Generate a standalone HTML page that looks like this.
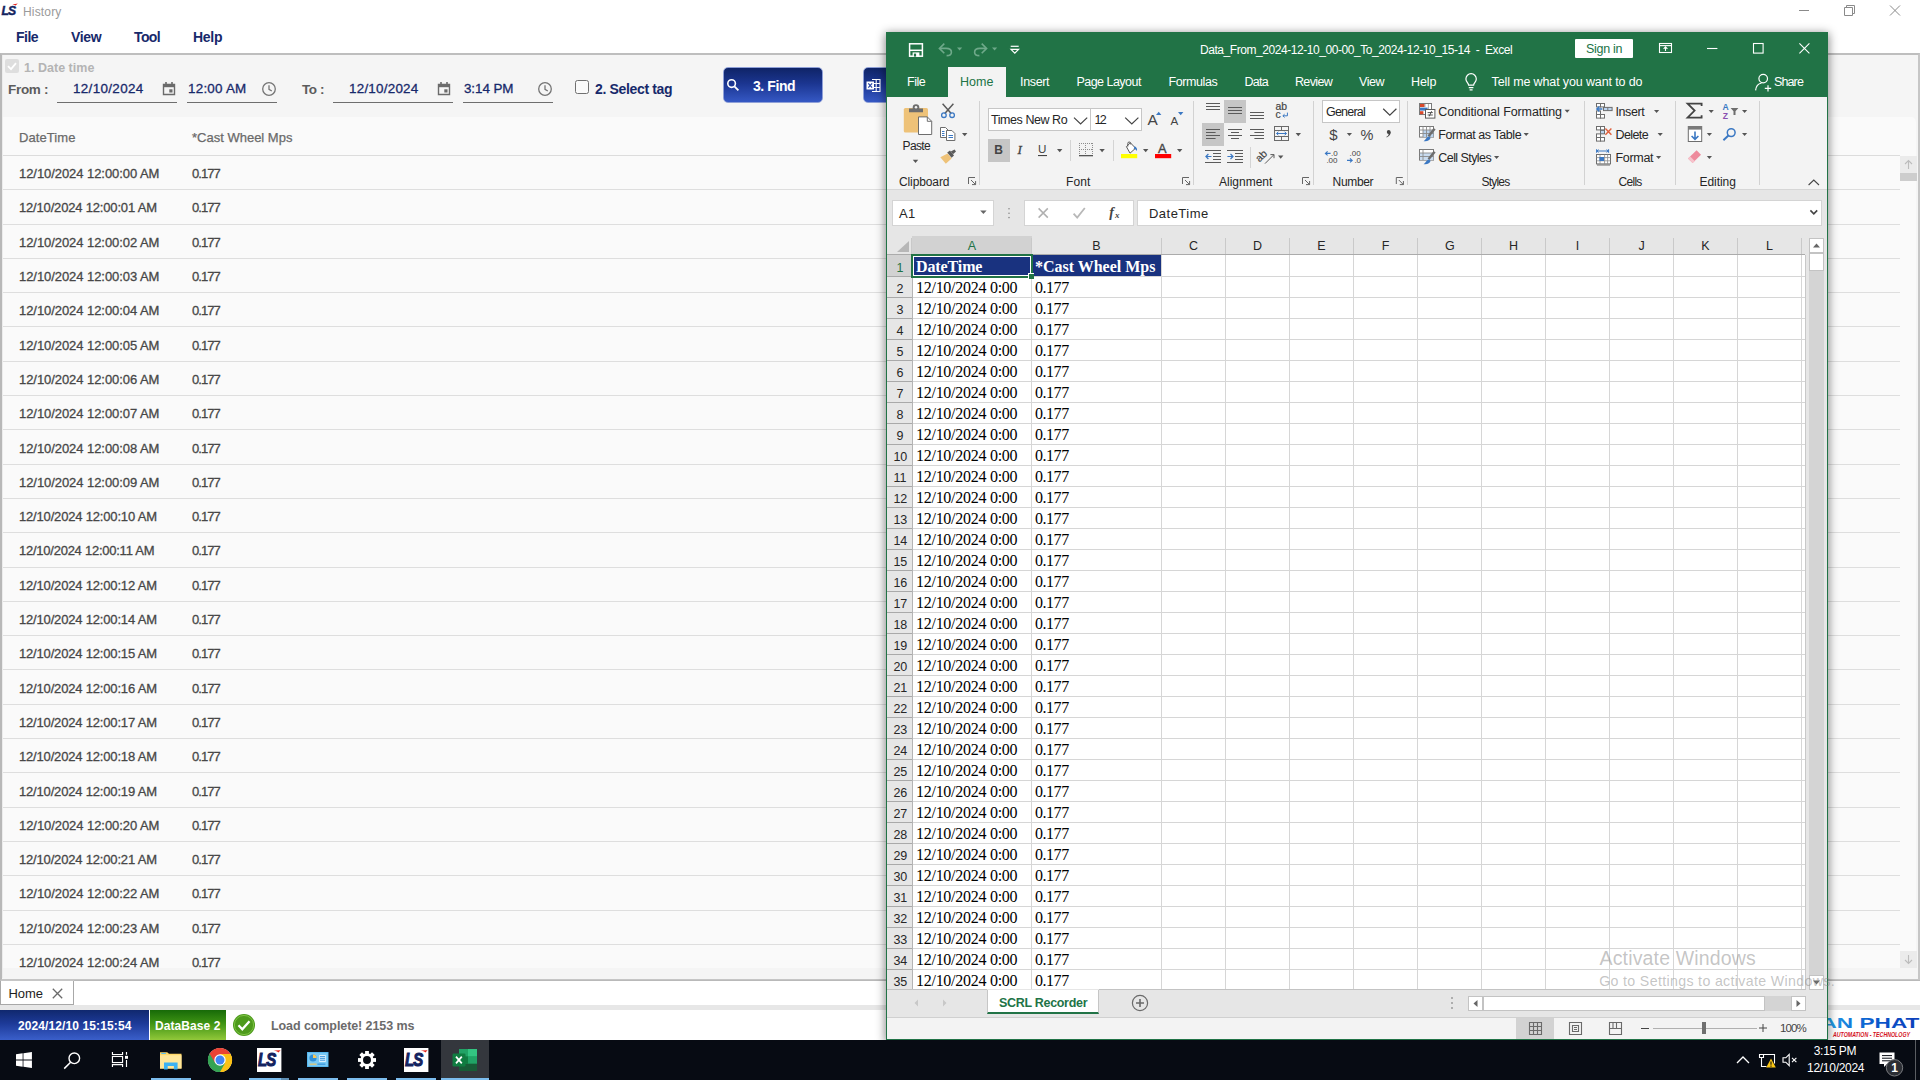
<!DOCTYPE html>
<html><head><meta charset="utf-8"><title>History</title><style>
*{margin:0;padding:0;box-sizing:border-box}
html,body{width:1920px;height:1080px;overflow:hidden;background:#fff;font-family:"Liberation Sans",sans-serif}
#root{position:relative;width:1920px;height:1080px;overflow:hidden}
#root div,#root svg,#root span.t{position:absolute}
span.t{white-space:pre;display:block}
</style></head><body><div id="root">
<div style="left:0px;top:0px;width:1920px;height:53px;background:#fff;"></div>
<svg style="left:1px;top:3px;" width="18" height="14" viewBox="0 0 18 14"><text x="0.6" y="11.8" font-family="Liberation Sans" font-weight="700" font-style="italic" font-size="12.2" fill="#14245f" stroke="#14245f" stroke-width=".45" letter-spacing="-1">LS</text><path d="M11.5 1.6 L16.8 0.6 L14.6 2.6 Z" fill="#e2231a"/></svg>
<span id="t0" class="t" style="left:23px;top:3.00px;line-height:18px;font-size:12px;color:#9a9a9a;font-family:'Liberation Sans',sans-serif;letter-spacing:0.162px;">History</span>
<span id="t1" class="t" style="left:16px;top:27.00px;line-height:20px;font-size:14px;color:#17296b;font-family:'Liberation Sans',sans-serif;font-weight:700;letter-spacing:-0.493px;">File</span>
<span id="t2" class="t" style="left:71px;top:27.00px;line-height:20px;font-size:14px;color:#17296b;font-family:'Liberation Sans',sans-serif;font-weight:700;letter-spacing:-0.359px;">View</span>
<span id="t3" class="t" style="left:134px;top:27.00px;line-height:20px;font-size:14px;color:#17296b;font-family:'Liberation Sans',sans-serif;font-weight:700;letter-spacing:-0.604px;">Tool</span>
<span id="t4" class="t" style="left:193px;top:27.00px;line-height:20px;font-size:14px;color:#17296b;font-family:'Liberation Sans',sans-serif;font-weight:700;letter-spacing:-0.270px;">Help</span>
<svg style="left:1795px;top:0px;" width="120" height="22" viewBox="0 0 120 22"><g stroke="#8a8a8a" stroke-width="1" fill="none"><path d="M4 10.5H14"/><path d="M49.5 7.5h8v8h-8z"/><path d="M51.5 7.5v-2h8v8h-2"/><path d="M95 5.5l10 10M105 5.5l-10 10"/></g></svg>
<div style="left:0px;top:53px;width:1920px;height:928px;background:#f5f5f5;border:2px solid #c6c6c6;border-left-color:#b8b8b8;border-top-color:#bebebe;"></div>
<div style="left:2px;top:55px;width:1px;height:923px;background:#ececec;"></div>
<div style="left:3px;top:117px;width:1913px;height:851px;background:#fafafa;border-radius:0 5px 0 0;"></div>
<svg style="left:5px;top:59px;" width="14" height="14" viewBox="0 0 14 14"><rect x="0" y="0" width="14" height="14" rx="2" fill="#dedede"/><path d="M3 7.2l3 3 5-6" stroke="#fff" stroke-width="1.8" fill="none"/></svg>
<span id="t5" class="t" style="left:24px;top:58.50px;line-height:18px;font-size:12.5px;color:#b4b4b4;font-family:'Liberation Sans',sans-serif;font-weight:700;letter-spacing:0.020px;">1. Date time</span>
<span id="t6" class="t" style="left:8px;top:80.00px;line-height:20px;font-size:13.5px;color:#5c5c5c;font-family:'Liberation Sans',sans-serif;font-weight:700;letter-spacing:-0.291px;">From :</span>
<span id="t7" class="t" style="left:73px;top:79.40px;line-height:19px;font-size:13.4px;color:#17296b;font-family:'Liberation Sans',sans-serif;-webkit-text-stroke:0.3px #17296b;letter-spacing:0.355px;">12/10/2024</span>
<div style="left:57px;top:102px;width:120px;height:1px;background:#6e6e6e;"></div>
<svg style="left:162px;top:81px;" width="14" height="15" viewBox="0 0 14 15"><path d="M1.5 3.5h11v10h-11z" fill="none" stroke="#6b6b6b" stroke-width="1.4"/><rect x="1" y="3" width="12" height="3.2" fill="#6b6b6b"/><rect x="3.2" y="1" width="1.6" height="3" fill="#6b6b6b"/><rect x="9.2" y="1" width="1.6" height="3" fill="#6b6b6b"/><rect x="7.3" y="8.3" width="3.2" height="3.2" fill="#6b6b6b"/></svg>
<span id="t8" class="t" style="left:188px;top:79.40px;line-height:19px;font-size:13.4px;color:#17296b;font-family:'Liberation Sans',sans-serif;-webkit-text-stroke:0.3px #17296b;letter-spacing:0.243px;">12:00 AM</span>
<div style="left:187px;top:102px;width:90px;height:1px;background:#6e6e6e;"></div>
<svg style="left:261px;top:81px;" width="16" height="16" viewBox="0 0 16 16"><circle cx="8" cy="8" r="6.3" fill="none" stroke="#757575" stroke-width="1.3"/><path d="M8 4.2V8.3l2.8 1.7" fill="none" stroke="#757575" stroke-width="1.3"/></svg>
<span id="t9" class="t" style="left:302px;top:80.00px;line-height:20px;font-size:13.5px;color:#5c5c5c;font-family:'Liberation Sans',sans-serif;font-weight:700;letter-spacing:-0.386px;">To :</span>
<span id="t10" class="t" style="left:349px;top:79.40px;line-height:19px;font-size:13.4px;color:#17296b;font-family:'Liberation Sans',sans-serif;-webkit-text-stroke:0.3px #17296b;letter-spacing:0.249px;">12/10/2024</span>
<div style="left:333px;top:102px;width:120px;height:1px;background:#6e6e6e;"></div>
<svg style="left:437px;top:81px;" width="14" height="15" viewBox="0 0 14 15"><path d="M1.5 3.5h11v10h-11z" fill="none" stroke="#6b6b6b" stroke-width="1.4"/><rect x="1" y="3" width="12" height="3.2" fill="#6b6b6b"/><rect x="3.2" y="1" width="1.6" height="3" fill="#6b6b6b"/><rect x="9.2" y="1" width="1.6" height="3" fill="#6b6b6b"/><rect x="7.3" y="8.3" width="3.2" height="3.2" fill="#6b6b6b"/></svg>
<span id="t11" class="t" style="left:464px;top:79.40px;line-height:19px;font-size:13.4px;color:#17296b;font-family:'Liberation Sans',sans-serif;-webkit-text-stroke:0.3px #17296b;letter-spacing:-0.073px;">3:14 PM</span>
<div style="left:463px;top:102px;width:90px;height:1px;background:#6e6e6e;"></div>
<svg style="left:537px;top:81px;" width="16" height="16" viewBox="0 0 16 16"><circle cx="8" cy="8" r="6.3" fill="none" stroke="#757575" stroke-width="1.3"/><path d="M8 4.2V8.3l2.8 1.7" fill="none" stroke="#757575" stroke-width="1.3"/></svg>
<div style="left:575px;top:80px;width:14px;height:14px;background:#fafafa;border:1.6px solid #707070;border-radius:2.5px;"></div>
<span id="t12" class="t" style="left:595px;top:79.00px;line-height:20px;font-size:14px;color:#17296b;font-family:'Liberation Sans',sans-serif;font-weight:700;letter-spacing:-0.344px;">2. Select tag</span>
<div style="left:723px;top:67px;width:100px;height:36px;background:linear-gradient(#0f2467 0%,#1b3590 45%,#3558c4 100%);border:1px solid #8fa0d8;border-radius:5px;"></div>
<svg style="left:726px;top:78px;" width="14" height="14" viewBox="0 0 14 14"><circle cx="5.6" cy="5.6" r="3.8" fill="none" stroke="#fff" stroke-width="1.6"/><path d="M8.4 8.4L12.4 12.4" stroke="#fff" stroke-width="1.8"/></svg>
<span id="t13" class="t" style="left:753px;top:76.00px;line-height:20px;font-size:14px;color:#fff;font-family:'Liberation Sans',sans-serif;font-weight:700;letter-spacing:-0.419px;">3. Find</span>
<div style="left:863px;top:67px;width:60px;height:36px;background:linear-gradient(#0f2467 0%,#1b3590 45%,#3558c4 100%);border:1px solid #8fa0d8;border-radius:5px;"></div>
<svg style="left:866px;top:78px;" width="16" height="15" viewBox="0 0 16 15"><g fill="none" stroke="#fff" stroke-width="1.1"><path d="M6 1.5h8v12h-8"/><path d="M6 5.5h8M6 9.5h8M10.2 1.5v12"/></g><rect x="0.5" y="3.5" width="7.5" height="8" fill="#fff"/><path d="M2.3 5.3l3.8 4.4M6.1 5.3l-3.8 4.4" stroke="#2a48a8" stroke-width="1.2"/></svg>
<span id="t14" class="t" style="left:19px;top:128.00px;line-height:19px;font-size:13px;color:#6a6a6a;font-family:'Liberation Sans',sans-serif;-webkit-text-stroke:0.25px #6a6a6a;letter-spacing:0.070px;">DateTime</span>
<span id="t15" class="t" style="left:192px;top:128.00px;line-height:19px;font-size:13px;color:#6a6a6a;font-family:'Liberation Sans',sans-serif;-webkit-text-stroke:0.25px #6a6a6a;">*Cast Wheel Mps</span>
<div style="left:3px;top:155px;width:1897px;height:1px;background:#dcdcdc;"></div>
<span id="t16" class="t" style="left:19px;top:164.10px;line-height:19px;font-size:13px;color:#474747;font-family:'Liberation Sans',sans-serif;-webkit-text-stroke:0.3px #474747;letter-spacing:-0.060px;">12/10/2024 12:00:00 AM</span>
<span id="t17" class="t" style="left:192px;top:164.10px;line-height:19px;font-size:13px;color:#474747;font-family:'Liberation Sans',sans-serif;-webkit-text-stroke:0.3px #474747;letter-spacing:-0.922px;">0.177</span>
<div style="left:3px;top:189px;width:1897px;height:1px;background:#dedede;"></div>
<span id="t18" class="t" style="left:19px;top:198.40px;line-height:19px;font-size:13px;color:#474747;font-family:'Liberation Sans',sans-serif;-webkit-text-stroke:0.3px #474747;letter-spacing:-0.176px;">12/10/2024 12:00:01 AM</span>
<span id="t19" class="t" style="left:192px;top:198.40px;line-height:19px;font-size:13px;color:#474747;font-family:'Liberation Sans',sans-serif;-webkit-text-stroke:0.3px #474747;letter-spacing:-0.922px;">0.177</span>
<div style="left:3px;top:224px;width:1897px;height:1px;background:#dedede;"></div>
<span id="t20" class="t" style="left:19px;top:232.71px;line-height:19px;font-size:13px;color:#474747;font-family:'Liberation Sans',sans-serif;-webkit-text-stroke:0.3px #474747;letter-spacing:-0.060px;">12/10/2024 12:00:02 AM</span>
<span id="t21" class="t" style="left:192px;top:232.71px;line-height:19px;font-size:13px;color:#474747;font-family:'Liberation Sans',sans-serif;-webkit-text-stroke:0.3px #474747;letter-spacing:-0.922px;">0.177</span>
<div style="left:3px;top:258px;width:1897px;height:1px;background:#dedede;"></div>
<span id="t22" class="t" style="left:19px;top:267.01px;line-height:19px;font-size:13px;color:#474747;font-family:'Liberation Sans',sans-serif;-webkit-text-stroke:0.3px #474747;letter-spacing:-0.060px;">12/10/2024 12:00:03 AM</span>
<span id="t23" class="t" style="left:192px;top:267.01px;line-height:19px;font-size:13px;color:#474747;font-family:'Liberation Sans',sans-serif;-webkit-text-stroke:0.3px #474747;letter-spacing:-0.922px;">0.177</span>
<div style="left:3px;top:292px;width:1897px;height:1px;background:#dedede;"></div>
<span id="t24" class="t" style="left:19px;top:301.32px;line-height:19px;font-size:13px;color:#474747;font-family:'Liberation Sans',sans-serif;-webkit-text-stroke:0.3px #474747;letter-spacing:-0.060px;">12/10/2024 12:00:04 AM</span>
<span id="t25" class="t" style="left:192px;top:301.32px;line-height:19px;font-size:13px;color:#474747;font-family:'Liberation Sans',sans-serif;-webkit-text-stroke:0.3px #474747;letter-spacing:-0.922px;">0.177</span>
<div style="left:3px;top:326px;width:1897px;height:1px;background:#dedede;"></div>
<span id="t26" class="t" style="left:19px;top:335.62px;line-height:19px;font-size:13px;color:#474747;font-family:'Liberation Sans',sans-serif;-webkit-text-stroke:0.3px #474747;letter-spacing:-0.060px;">12/10/2024 12:00:05 AM</span>
<span id="t27" class="t" style="left:192px;top:335.62px;line-height:19px;font-size:13px;color:#474747;font-family:'Liberation Sans',sans-serif;-webkit-text-stroke:0.3px #474747;letter-spacing:-0.922px;">0.177</span>
<div style="left:3px;top:361px;width:1897px;height:1px;background:#dedede;"></div>
<span id="t28" class="t" style="left:19px;top:369.92px;line-height:19px;font-size:13px;color:#474747;font-family:'Liberation Sans',sans-serif;-webkit-text-stroke:0.3px #474747;letter-spacing:-0.060px;">12/10/2024 12:00:06 AM</span>
<span id="t29" class="t" style="left:192px;top:369.92px;line-height:19px;font-size:13px;color:#474747;font-family:'Liberation Sans',sans-serif;-webkit-text-stroke:0.3px #474747;letter-spacing:-0.922px;">0.177</span>
<div style="left:3px;top:395px;width:1897px;height:1px;background:#dedede;"></div>
<span id="t30" class="t" style="left:19px;top:404.23px;line-height:19px;font-size:13px;color:#474747;font-family:'Liberation Sans',sans-serif;-webkit-text-stroke:0.3px #474747;letter-spacing:-0.060px;">12/10/2024 12:00:07 AM</span>
<span id="t31" class="t" style="left:192px;top:404.23px;line-height:19px;font-size:13px;color:#474747;font-family:'Liberation Sans',sans-serif;-webkit-text-stroke:0.3px #474747;letter-spacing:-0.922px;">0.177</span>
<div style="left:3px;top:429px;width:1897px;height:1px;background:#dedede;"></div>
<span id="t32" class="t" style="left:19px;top:438.53px;line-height:19px;font-size:13px;color:#474747;font-family:'Liberation Sans',sans-serif;-webkit-text-stroke:0.3px #474747;letter-spacing:-0.060px;">12/10/2024 12:00:08 AM</span>
<span id="t33" class="t" style="left:192px;top:438.53px;line-height:19px;font-size:13px;color:#474747;font-family:'Liberation Sans',sans-serif;-webkit-text-stroke:0.3px #474747;letter-spacing:-0.922px;">0.177</span>
<div style="left:3px;top:464px;width:1897px;height:1px;background:#dedede;"></div>
<span id="t34" class="t" style="left:19px;top:472.84px;line-height:19px;font-size:13px;color:#474747;font-family:'Liberation Sans',sans-serif;-webkit-text-stroke:0.3px #474747;letter-spacing:-0.060px;">12/10/2024 12:00:09 AM</span>
<span id="t35" class="t" style="left:192px;top:472.84px;line-height:19px;font-size:13px;color:#474747;font-family:'Liberation Sans',sans-serif;-webkit-text-stroke:0.3px #474747;letter-spacing:-0.922px;">0.177</span>
<div style="left:3px;top:498px;width:1897px;height:1px;background:#dedede;"></div>
<span id="t36" class="t" style="left:19px;top:507.14px;line-height:19px;font-size:13px;color:#474747;font-family:'Liberation Sans',sans-serif;-webkit-text-stroke:0.3px #474747;letter-spacing:-0.176px;">12/10/2024 12:00:10 AM</span>
<span id="t37" class="t" style="left:192px;top:507.14px;line-height:19px;font-size:13px;color:#474747;font-family:'Liberation Sans',sans-serif;-webkit-text-stroke:0.3px #474747;letter-spacing:-0.922px;">0.177</span>
<div style="left:3px;top:532px;width:1897px;height:1px;background:#dedede;"></div>
<span id="t38" class="t" style="left:19px;top:541.44px;line-height:19px;font-size:13px;color:#474747;font-family:'Liberation Sans',sans-serif;-webkit-text-stroke:0.3px #474747;letter-spacing:-0.247px;">12/10/2024 12:00:11 AM</span>
<span id="t39" class="t" style="left:192px;top:541.44px;line-height:19px;font-size:13px;color:#474747;font-family:'Liberation Sans',sans-serif;-webkit-text-stroke:0.3px #474747;letter-spacing:-0.922px;">0.177</span>
<div style="left:3px;top:567px;width:1897px;height:1px;background:#dedede;"></div>
<span id="t40" class="t" style="left:19px;top:575.75px;line-height:19px;font-size:13px;color:#474747;font-family:'Liberation Sans',sans-serif;-webkit-text-stroke:0.3px #474747;letter-spacing:-0.176px;">12/10/2024 12:00:12 AM</span>
<span id="t41" class="t" style="left:192px;top:575.75px;line-height:19px;font-size:13px;color:#474747;font-family:'Liberation Sans',sans-serif;-webkit-text-stroke:0.3px #474747;letter-spacing:-0.922px;">0.177</span>
<div style="left:3px;top:601px;width:1897px;height:1px;background:#dedede;"></div>
<span id="t42" class="t" style="left:19px;top:610.05px;line-height:19px;font-size:13px;color:#474747;font-family:'Liberation Sans',sans-serif;-webkit-text-stroke:0.3px #474747;letter-spacing:-0.176px;">12/10/2024 12:00:14 AM</span>
<span id="t43" class="t" style="left:192px;top:610.05px;line-height:19px;font-size:13px;color:#474747;font-family:'Liberation Sans',sans-serif;-webkit-text-stroke:0.3px #474747;letter-spacing:-0.922px;">0.177</span>
<div style="left:3px;top:635px;width:1897px;height:1px;background:#dedede;"></div>
<span id="t44" class="t" style="left:19px;top:644.36px;line-height:19px;font-size:13px;color:#474747;font-family:'Liberation Sans',sans-serif;-webkit-text-stroke:0.3px #474747;letter-spacing:-0.176px;">12/10/2024 12:00:15 AM</span>
<span id="t45" class="t" style="left:192px;top:644.36px;line-height:19px;font-size:13px;color:#474747;font-family:'Liberation Sans',sans-serif;-webkit-text-stroke:0.3px #474747;letter-spacing:-0.922px;">0.177</span>
<div style="left:3px;top:669px;width:1897px;height:1px;background:#dedede;"></div>
<span id="t46" class="t" style="left:19px;top:678.66px;line-height:19px;font-size:13px;color:#474747;font-family:'Liberation Sans',sans-serif;-webkit-text-stroke:0.3px #474747;letter-spacing:-0.176px;">12/10/2024 12:00:16 AM</span>
<span id="t47" class="t" style="left:192px;top:678.66px;line-height:19px;font-size:13px;color:#474747;font-family:'Liberation Sans',sans-serif;-webkit-text-stroke:0.3px #474747;letter-spacing:-0.922px;">0.177</span>
<div style="left:3px;top:704px;width:1897px;height:1px;background:#dedede;"></div>
<span id="t48" class="t" style="left:19px;top:712.96px;line-height:19px;font-size:13px;color:#474747;font-family:'Liberation Sans',sans-serif;-webkit-text-stroke:0.3px #474747;letter-spacing:-0.176px;">12/10/2024 12:00:17 AM</span>
<span id="t49" class="t" style="left:192px;top:712.96px;line-height:19px;font-size:13px;color:#474747;font-family:'Liberation Sans',sans-serif;-webkit-text-stroke:0.3px #474747;letter-spacing:-0.922px;">0.177</span>
<div style="left:3px;top:738px;width:1897px;height:1px;background:#dedede;"></div>
<span id="t50" class="t" style="left:19px;top:747.27px;line-height:19px;font-size:13px;color:#474747;font-family:'Liberation Sans',sans-serif;-webkit-text-stroke:0.3px #474747;letter-spacing:-0.176px;">12/10/2024 12:00:18 AM</span>
<span id="t51" class="t" style="left:192px;top:747.27px;line-height:19px;font-size:13px;color:#474747;font-family:'Liberation Sans',sans-serif;-webkit-text-stroke:0.3px #474747;letter-spacing:-0.922px;">0.177</span>
<div style="left:3px;top:772px;width:1897px;height:1px;background:#dedede;"></div>
<span id="t52" class="t" style="left:19px;top:781.57px;line-height:19px;font-size:13px;color:#474747;font-family:'Liberation Sans',sans-serif;-webkit-text-stroke:0.3px #474747;letter-spacing:-0.176px;">12/10/2024 12:00:19 AM</span>
<span id="t53" class="t" style="left:192px;top:781.57px;line-height:19px;font-size:13px;color:#474747;font-family:'Liberation Sans',sans-serif;-webkit-text-stroke:0.3px #474747;letter-spacing:-0.922px;">0.177</span>
<div style="left:3px;top:807px;width:1897px;height:1px;background:#dedede;"></div>
<span id="t54" class="t" style="left:19px;top:815.88px;line-height:19px;font-size:13px;color:#474747;font-family:'Liberation Sans',sans-serif;-webkit-text-stroke:0.3px #474747;letter-spacing:-0.060px;">12/10/2024 12:00:20 AM</span>
<span id="t55" class="t" style="left:192px;top:815.88px;line-height:19px;font-size:13px;color:#474747;font-family:'Liberation Sans',sans-serif;-webkit-text-stroke:0.3px #474747;letter-spacing:-0.922px;">0.177</span>
<div style="left:3px;top:841px;width:1897px;height:1px;background:#dedede;"></div>
<span id="t56" class="t" style="left:19px;top:850.18px;line-height:19px;font-size:13px;color:#474747;font-family:'Liberation Sans',sans-serif;-webkit-text-stroke:0.3px #474747;letter-spacing:-0.176px;">12/10/2024 12:00:21 AM</span>
<span id="t57" class="t" style="left:192px;top:850.18px;line-height:19px;font-size:13px;color:#474747;font-family:'Liberation Sans',sans-serif;-webkit-text-stroke:0.3px #474747;letter-spacing:-0.922px;">0.177</span>
<div style="left:3px;top:875px;width:1897px;height:1px;background:#dedede;"></div>
<span id="t58" class="t" style="left:19px;top:884.48px;line-height:19px;font-size:13px;color:#474747;font-family:'Liberation Sans',sans-serif;-webkit-text-stroke:0.3px #474747;letter-spacing:-0.060px;">12/10/2024 12:00:22 AM</span>
<span id="t59" class="t" style="left:192px;top:884.48px;line-height:19px;font-size:13px;color:#474747;font-family:'Liberation Sans',sans-serif;-webkit-text-stroke:0.3px #474747;letter-spacing:-0.922px;">0.177</span>
<div style="left:3px;top:910px;width:1897px;height:1px;background:#dedede;"></div>
<span id="t60" class="t" style="left:19px;top:918.79px;line-height:19px;font-size:13px;color:#474747;font-family:'Liberation Sans',sans-serif;-webkit-text-stroke:0.3px #474747;letter-spacing:-0.060px;">12/10/2024 12:00:23 AM</span>
<span id="t61" class="t" style="left:192px;top:918.79px;line-height:19px;font-size:13px;color:#474747;font-family:'Liberation Sans',sans-serif;-webkit-text-stroke:0.3px #474747;letter-spacing:-0.922px;">0.177</span>
<div style="left:3px;top:944px;width:1897px;height:1px;background:#dedede;"></div>
<span id="t62" class="t" style="left:19px;top:953.09px;line-height:19px;font-size:13px;color:#474747;font-family:'Liberation Sans',sans-serif;-webkit-text-stroke:0.3px #474747;letter-spacing:-0.060px;">12/10/2024 12:00:24 AM</span>
<span id="t63" class="t" style="left:192px;top:953.09px;line-height:19px;font-size:13px;color:#474747;font-family:'Liberation Sans',sans-serif;-webkit-text-stroke:0.3px #474747;letter-spacing:-0.922px;">0.177</span>
<div style="left:1900px;top:156px;width:17px;height:17px;background:#ebebeb;"></div>
<div style="left:1900px;top:173px;width:17px;height:8px;background:#cdcdcd;"></div>
<svg style="left:1900px;top:156px;" width="17" height="17" viewBox="0 0 17 17"><path d="M8.5 13V4.5M5 8l3.5-3.5L12 8" fill="none" stroke="#bcbcbc" stroke-width="1.1"/></svg>
<div style="left:1900px;top:951px;width:17px;height:17px;background:#ebebeb;"></div>
<svg style="left:1900px;top:951px;" width="17" height="17" viewBox="0 0 17 17"><path d="M8.5 4V12.5M5 9l3.5 3.5L12 9" fill="none" stroke="#bcbcbc" stroke-width="1.1"/></svg>
<div style="left:0px;top:981px;width:1920px;height:24px;background:#fff;"></div>
<div style="left:74px;top:980px;width:1846px;height:1px;background:#b9b9b9;"></div>
<div style="left:0px;top:981px;width:74px;height:24px;background:#fff;border:1px solid #a8a8a8;border-top:none;"></div>
<span id="t64" class="t" style="left:8.5px;top:984.00px;line-height:19px;font-size:13px;color:#1e1e1e;font-family:'Liberation Sans',sans-serif;letter-spacing:-0.082px;">Home</span>
<svg style="left:51px;top:987px;" width="13" height="13" viewBox="0 0 13 13"><path d="M1.8 1.8l9.4 9.4M11.2 1.8l-9.4 9.4" stroke="#6a6a6a" stroke-width="1.3"/></svg>
<div style="left:0px;top:1005px;width:1920px;height:5px;background:#e7e7e7;"></div>
<div style="left:0px;top:1010px;width:1920px;height:30px;background:#fff;"></div>
<div style="left:0px;top:1010px;width:149px;height:30px;background:linear-gradient(#10286e 0%,#1d3a98 45%,#3a5fca 100%);"></div>
<span id="t65" class="t" style="left:18px;top:1016.50px;line-height:18px;font-size:12px;color:#fff;font-family:'Liberation Sans',sans-serif;font-weight:700;letter-spacing:0.106px;">2024/12/10 15:15:54</span>
<div style="left:150px;top:1010px;width:76px;height:30px;background:linear-gradient(#176a08 0%,#3f9414 45%,#92c83a 100%);"></div>
<span id="t66" class="t" style="left:155px;top:1016.50px;line-height:18px;font-size:12px;color:#fff;font-family:'Liberation Sans',sans-serif;font-weight:700;letter-spacing:0.072px;">DataBase 2</span>
<svg style="left:232px;top:1013px;" width="24" height="24" viewBox="0 0 24 24"><circle cx="12" cy="12" r="11" fill="#4d9a1c"/><circle cx="12" cy="12" r="9.6" fill="none" stroke="#7cc242" stroke-width="1"/><path d="M6.5 12.3l3.8 3.9 7.2-8" fill="none" stroke="#fff" stroke-width="2.3"/></svg>
<span id="t67" class="t" style="left:271px;top:1016.50px;line-height:18px;font-size:12.5px;color:#6b6b6b;font-family:'Liberation Sans',sans-serif;font-weight:700;letter-spacing:-0.084px;">Load complete! 2153 ms</span>
<svg style="left:1780px;top:1010px" width="140" height="30" viewBox="0 0 140 30"><defs><linearGradient id="ap" gradientUnits="userSpaceOnUse" x1="-64" y1="0" x2="0" y2="0"><stop offset="0" stop-color="#2aaceb"/><stop offset="0.38" stop-color="#0f6fd6"/><stop offset="0.6" stop-color="#0a56ca"/><stop offset="1" stop-color="#0c3fba"/></linearGradient></defs><g transform="translate(139.4 17.6) scale(1.54 1)"><text x="0" y="0" text-anchor="end" font-family="Liberation Sans" font-weight="700" font-size="14.7" fill="url(#ap)">TAN PHAT</text></g><text x="130" y="26.6" text-anchor="end" font-family="Liberation Sans" font-weight="700" font-style="italic" font-size="6.8" fill="#d4121c" textLength="77" lengthAdjust="spacingAndGlyphs">AUTOMATION - TECHNOLOGY</text></svg>
<div style="left:886px;top:32px;width:942px;height:1008px;background:#f3f3f3;box-shadow:0 2px 9px 1px rgba(0,0,0,.45);"></div>
<div style="left:886px;top:32px;width:942px;height:65px;background:#217346;"></div>
<div style="left:887px;top:97px;width:940px;height:92px;background:#f3f3f3;"></div>
<div style="left:887px;top:189px;width:940px;height:1px;background:#d6d6d6;"></div>
<div style="left:887px;top:190px;width:940px;height:47px;background:#e6e6e6;"></div>
<div style="left:886px;top:97px;width:1px;height:942px;background:#217346;"></div>
<div style="left:1827px;top:97px;width:1px;height:942px;background:#217346;"></div>
<div style="left:886px;top:1039px;width:942px;height:1px;background:#217346;"></div>
<span id="t68" class="t" style="left:1200px;top:41.00px;line-height:18px;font-size:12px;color:#fff;font-family:'Liberation Sans',sans-serif;letter-spacing:-0.441px;">Data_From_2024-12-10_00-00_To_2024-12-10_15-14  -  Excel</span>
<div style="left:1575px;top:39px;width:58px;height:19px;background:#fff;border-radius:1px;"></div>
<span id="t69" class="t" style="left:1586px;top:40.00px;line-height:18px;font-size:12.5px;color:#217346;font-family:'Liberation Sans',sans-serif;letter-spacing:-0.282px;">Sign in</span>
<div style="left:948px;top:67px;width:58px;height:30px;background:#f3f3f3;"></div>
<span id="t70" class="t" style="left:907px;top:73.00px;line-height:18px;font-size:12.5px;color:#fff;font-family:'Liberation Sans',sans-serif;letter-spacing:-0.502px;">File</span>
<span id="t71" class="t" style="left:960px;top:73.00px;line-height:18px;font-size:12.5px;color:#217346;font-family:'Liberation Sans',sans-serif;letter-spacing:0.016px;">Home</span>
<span id="t72" class="t" style="left:1020px;top:73.00px;line-height:18px;font-size:12.5px;color:#fff;font-family:'Liberation Sans',sans-serif;letter-spacing:-0.339px;">Insert</span>
<span id="t73" class="t" style="left:1076.4px;top:73.00px;line-height:18px;font-size:12.5px;color:#fff;font-family:'Liberation Sans',sans-serif;letter-spacing:-0.515px;">Page Layout</span>
<span id="t74" class="t" style="left:1168.5px;top:73.00px;line-height:18px;font-size:12.5px;color:#fff;font-family:'Liberation Sans',sans-serif;letter-spacing:-0.399px;">Formulas</span>
<span id="t75" class="t" style="left:1244.5px;top:73.00px;line-height:18px;font-size:12.5px;color:#fff;font-family:'Liberation Sans',sans-serif;letter-spacing:-0.716px;">Data</span>
<span id="t76" class="t" style="left:1295px;top:73.00px;line-height:18px;font-size:12.5px;color:#fff;font-family:'Liberation Sans',sans-serif;letter-spacing:-0.655px;">Review</span>
<span id="t77" class="t" style="left:1359px;top:73.00px;line-height:18px;font-size:12.5px;color:#fff;font-family:'Liberation Sans',sans-serif;letter-spacing:-0.421px;">View</span>
<span id="t78" class="t" style="left:1411px;top:73.00px;line-height:18px;font-size:12.5px;color:#fff;font-family:'Liberation Sans',sans-serif;letter-spacing:-0.091px;">Help</span>
<span id="t79" class="t" style="left:1491.6px;top:73.00px;line-height:18px;font-size:12.5px;color:#fff;font-family:'Liberation Sans',sans-serif;letter-spacing:-0.130px;">Tell me what you want to do</span>
<span id="t80" class="t" style="left:1774px;top:73.00px;line-height:18px;font-size:12.5px;color:#fff;font-family:'Liberation Sans',sans-serif;letter-spacing:-0.880px;">Share</span>
<div style="left:979px;top:101px;width:1px;height:84px;background:#d2d2d2;"></div>
<div style="left:1193px;top:101px;width:1px;height:84px;background:#d2d2d2;"></div>
<div style="left:1313px;top:101px;width:1px;height:84px;background:#d2d2d2;"></div>
<div style="left:1407px;top:101px;width:1px;height:84px;background:#d2d2d2;"></div>
<div style="left:1584px;top:101px;width:1px;height:84px;background:#d2d2d2;"></div>
<div style="left:1675px;top:101px;width:1px;height:84px;background:#d2d2d2;"></div>
<div style="left:1759px;top:101px;width:1px;height:84px;background:#d2d2d2;"></div>
<div style="left:1070px;top:140px;width:1px;height:21px;background:#d4d4d4;"></div>
<div style="left:1113px;top:140px;width:1px;height:21px;background:#d4d4d4;"></div>
<div style="left:1250px;top:147px;width:1px;height:21px;background:#d4d4d4;"></div>
<span id="t81" class="t" style="left:899px;top:172.60px;line-height:18px;font-size:12px;color:#262626;font-family:'Liberation Sans',sans-serif;letter-spacing:-0.115px;">Clipboard</span>
<span id="t82" class="t" style="left:1066px;top:172.60px;line-height:18px;font-size:12px;color:#262626;font-family:'Liberation Sans',sans-serif;letter-spacing:0.110px;">Font</span>
<span id="t83" class="t" style="left:1219px;top:172.60px;line-height:18px;font-size:12px;color:#262626;font-family:'Liberation Sans',sans-serif;">Alignment</span>
<span id="t84" class="t" style="left:1332.6px;top:172.60px;line-height:18px;font-size:12px;color:#262626;font-family:'Liberation Sans',sans-serif;letter-spacing:-0.343px;">Number</span>
<span id="t85" class="t" style="left:1481.4px;top:172.60px;line-height:18px;font-size:12px;color:#262626;font-family:'Liberation Sans',sans-serif;letter-spacing:-0.761px;">Styles</span>
<span id="t86" class="t" style="left:1618.5px;top:172.60px;line-height:18px;font-size:12px;color:#262626;font-family:'Liberation Sans',sans-serif;letter-spacing:-0.705px;">Cells</span>
<span id="t87" class="t" style="left:1699.5px;top:172.60px;line-height:18px;font-size:12px;color:#262626;font-family:'Liberation Sans',sans-serif;letter-spacing:-0.047px;">Editing</span>
<span id="t88" class="t" style="left:902.5px;top:136.50px;line-height:18px;font-size:12px;color:#262626;font-family:'Liberation Sans',sans-serif;letter-spacing:-0.619px;">Paste</span>
<div style="left:988px;top:108px;width:103px;height:23px;background:#fff;border:1px solid #c6c6c6;"></div>
<div style="left:1091px;top:108px;width:51px;height:23px;background:#fff;border:1px solid #c6c6c6;border-left:none;"></div>
<span id="t89" class="t" style="left:991px;top:110.50px;line-height:18px;font-size:12.5px;color:#262626;font-family:'Liberation Sans',sans-serif;letter-spacing:-0.443px;">Times New Ro</span>
<span id="t90" class="t" style="left:1094.4px;top:110.50px;line-height:18px;font-size:12.5px;color:#262626;font-family:'Liberation Sans',sans-serif;letter-spacing:-1.538px;">12</span>
<div style="left:988px;top:139px;width:22px;height:23px;background:#c6c6c6;"></div>
<div style="left:1224px;top:100px;width:22px;height:23px;background:#c6c6c6;"></div>
<div style="left:1202px;top:123px;width:22px;height:23px;background:#c6c6c6;"></div>
<div style="left:1322px;top:100px;width:78px;height:23px;background:#fff;border:1px solid #c6c6c6;"></div>
<span id="t91" class="t" style="left:1326px;top:102.50px;line-height:18px;font-size:12.5px;color:#262626;font-family:'Liberation Sans',sans-serif;letter-spacing:-0.782px;">General</span>
<span id="t92" class="t" style="left:1438.3px;top:102.80px;line-height:18px;font-size:12.5px;color:#262626;font-family:'Liberation Sans',sans-serif;letter-spacing:-0.096px;">Conditional Formatting</span>
<span id="t93" class="t" style="left:1438.3px;top:125.70px;line-height:18px;font-size:12.5px;color:#262626;font-family:'Liberation Sans',sans-serif;letter-spacing:-0.435px;">Format as Table</span>
<span id="t94" class="t" style="left:1438.3px;top:148.70px;line-height:18px;font-size:12.5px;color:#262626;font-family:'Liberation Sans',sans-serif;letter-spacing:-0.566px;">Cell Styles</span>
<span id="t95" class="t" style="left:1615.5px;top:102.80px;line-height:18px;font-size:12.5px;color:#262626;font-family:'Liberation Sans',sans-serif;letter-spacing:-0.430px;">Insert</span>
<span id="t96" class="t" style="left:1615.5px;top:125.70px;line-height:18px;font-size:12.5px;color:#262626;font-family:'Liberation Sans',sans-serif;letter-spacing:-0.589px;">Delete</span>
<span id="t97" class="t" style="left:1615.5px;top:148.70px;line-height:18px;font-size:12.5px;color:#262626;font-family:'Liberation Sans',sans-serif;letter-spacing:-0.308px;">Format</span>
<div style="left:892px;top:200px;width:102px;height:26px;background:#fff;border:1px solid #d4d4d4;"></div>
<span id="t98" class="t" style="left:899px;top:203.50px;line-height:19px;font-size:13px;color:#262626;font-family:'Liberation Sans',sans-serif;letter-spacing:0.329px;">A1</span>
<div style="left:1024px;top:200px;width:110px;height:26px;background:#fff;border:1px solid #d4d4d4;"></div>
<div style="left:1137px;top:200px;width:685px;height:26px;background:#fff;border:1px solid #d4d4d4;"></div>
<span id="t99" class="t" style="left:1149px;top:203.50px;line-height:19px;font-size:13px;color:#262626;font-family:'Liberation Sans',sans-serif;letter-spacing:0.470px;">DateTime</span>
<svg style="left:886px;top:32px" width="942" height="205" viewBox="886 32 942 205"><g fill="none" stroke="#fff" stroke-width="1.5"><rect x="909.6" y="43.8" width="12.8" height="12.4"/><path d="M910 50.3h12"/></g><rect x="912.6" y="52.4" width="6.8" height="4.2" fill="#fff"/><rect x="913.9" y="53.6" width="2.2" height="3" fill="#217346"/><g fill="none" stroke="#6fa98a" stroke-width="1.6"><path d="M944.3 43.6L939.4 48.4L944.3 53.2"/><path d="M939.8 48.4H946.2C949.8 48.4 951.4 50.4 951.4 52.2C951.4 54.4 949.6 55.6 946.6 55.6"/><path d="M981.7 43.6L986.6 48.4L981.7 53.2"/><path d="M986.2 48.4H979.8C976.2 48.4 974.6 50.4 974.6 52.2C974.6 54.4 976.4 55.6 979.4 55.6"/></g><path d="M957 47.6h5.2l-2.6 3z" fill="#6fa98a"/><path d="M992 47.6h5.2l-2.6 3z" fill="#6fa98a"/><g fill="none" stroke="#fff" stroke-width="1.2"><path d="M1010.7 46.3h8"/><path d="M1011 49.3h7.6l-3.8 3.9z"/></g><g fill="none" stroke="#fff" stroke-width="1.1"><rect x="1659.5" y="43.5" width="12" height="9"/><path d="M1659.5 45.6h12"/><path d="M1665.5 51v-3.8M1663.6 48.8l1.9-1.9 1.9 1.9"/><path d="M1707 48.5h10.4"/><rect x="1753.5" y="43.5" width="9.6" height="9.6"/><path d="M1799.4 43.4l10 10M1809.4 43.4l-10 10"/></g><g fill="none" stroke="#fff" stroke-width="1.2"><path d="M1468.6 85.2C1468.6 83 1465.9 82 1465.9 78.9a5.2 5.2 0 0 1 10.4 0C1476.3 82 1473.6 83 1473.6 85.2Z"/><path d="M1468.8 87.6h4.6M1469.6 89.8h3"/></g><g fill="none" stroke="#fff" stroke-width="1.2"><circle cx="1763.2" cy="78.6" r="4.3"/><path d="M1755.6 90.4c.4-4.6 3-6.8 6-7.4"/><path d="M1764.8 88.4h6.4M1768 85.2v6.4"/></g><rect x="903.8" y="108" width="24.2" height="24.6" rx="1.6" fill="#eec278"/><path d="M909 112.2v-3.6h3.7V107.6a3.3 3.3 0 0 1 6.6 0V108.6H923V112.2Z" fill="#6d6d6d"/><circle cx="916" cy="107.3" r="1.25" fill="#f3f3f3"/><path d="M918.5 116.9h8.8l4.4 4.4v13.2h-13.2Z" fill="#fff" stroke="#6d6d6d" stroke-width="1"/><path d="M927.3 116.9v4.4h4.4" fill="none" stroke="#6d6d6d" stroke-width="1"/><path d="M912.8 159.8h5.4l-2.7 3.2z" fill="#555"/><g fill="none" stroke="#5a5a5a" stroke-width="1.5"><path d="M942.6 103.8L951.2 113.4M953.4 103.8L944.8 113.4"/></g><g fill="none" stroke="#3b78c3" stroke-width="1.3"><circle cx="943.9" cy="115.2" r="2.3"/><circle cx="952.1" cy="115.2" r="2.3"/></g><g fill="#fff" stroke="#6d6d6d" stroke-width="1"><path d="M940.5 127.5h5l2.5 2.5v7.5h-7.5Z"/><path d="M946.5 130.5h5.4l3 3v7h-8.4Z"/></g><g stroke="#3b78c3" stroke-width="1"><path d="M942 131.5h2.5M942 133.5h2.5M942 135.5h2.5M948.5 135.5h4.5M948.5 137.5h4.5"/></g><path d="M962 133h5.4l-2.7 3.2z" fill="#555"/><path d="M940.3 157.2L947.6 153.4L951.6 158.6L945.8 163.8Z" fill="#eec278"/><path d="M947.2 152.6L950 150.6L954 155.6L951.6 157.8Z" fill="#5a5a5a"/><path d="M950.8 151.6L954.6 149.6L956 151.6L953 154.2Z" fill="#5a5a5a"/><path d="M968.5 184V177.5H975M971 180l4.6 4.6M975.6 181v3.6h-3.6" fill="none" stroke="#666" stroke-width="1"/><g fill="none" stroke="#444" stroke-width="1.2"><path d="M1074 117.6l6.6 6.4 6.6-6.4"/><path d="M1125.2 117.6l6.6 6.4 6.6-6.4"/><path d="M1383.2 108.8l6.6 6.4 6.6-6.4"/></g><text x="1147.6" y="125" font-family="Liberation Sans" font-size="15.4" fill="#444">A</text><path d="M1156 115l2.7-3.2 2.7 3.2z" fill="#3b78c3"/><text x="1170.6" y="125" font-family="Liberation Sans" font-size="11.6" fill="#444">A</text><path d="M1178 112h5.4l-2.7 3.2z" fill="#3b78c3"/><text x="994.2" y="153.6" font-family="Liberation Sans" font-weight="700" font-size="12" fill="#444">B</text><text x="1017.4" y="153.6" font-family="Liberation Serif" font-style="italic" font-size="13" fill="#444" stroke="#444" stroke-width=".3">I</text><text x="1038" y="153.4" font-family="Liberation Sans" font-size="11.6" fill="#444">U</text><rect x="1038" y="155" width="9" height="1.1" fill="#444"/><path d="M1057 149h5.4l-2.7 3.2z" fill="#555"/><g stroke="#8c8c8c" stroke-width="1" stroke-dasharray="1 1" shape-rendering="crispEdges"><path d="M1079 143.5h14M1079 149.5h14M1079.5 143v12M1085.5 143v12M1092.5 143v12"/></g><rect x="1079" y="155" width="14" height="1.3" fill="#555"/><path d="M1099.4 149h5.4l-2.7 3.2z" fill="#555"/><path d="M1126.4 146.6L1130.4 142.8L1135.6 148.2L1130 153.2Z" fill="#fff" stroke="#5a5a5a" stroke-width="1"/><path d="M1127.8 146.6v-3.2a1.4 1.4 0 0 1 2.8 0v1" fill="none" stroke="#5a5a5a" stroke-width="1"/><path d="M1134.6 146.2c1.8.6 2.8 2.4 2.4 4.8c-.9-1.4-1.9-2-3.3-2.3Z" fill="#3b78c3"/><rect x="1121" y="154" width="16.2" height="4.2" fill="#ffff00"/><path d="M1143 149h5.4l-2.7 3.2z" fill="#555"/><text x="1158" y="153.1" font-family="Liberation Sans" font-size="12.8" fill="#444" stroke="#444" stroke-width=".35">A</text><rect x="1155" y="154" width="16.2" height="4.2" fill="#ff0000"/><path d="M1177 149h5.4l-2.7 3.2z" fill="#555"/><path d="M1182.5 184V177.5H1189M1185 180l4.6 4.6M1189.6 181v3.6h-3.6" fill="none" stroke="#666" stroke-width="1"/><path d="M1206 103.5H1220M1206 106.5H1220M1206 109.5H1220" stroke="#5a5a5a" stroke-width="1" fill="none"/><path d="M1228 107.5H1242M1228 110.5H1242M1228 113.5H1242" stroke="#5a5a5a" stroke-width="1" fill="none"/><path d="M1250 112.5H1264M1250 115.5H1264M1250 118.5H1264" stroke="#5a5a5a" stroke-width="1" fill="none"/><text x="1275.4" y="110.2" font-family="Liberation Sans" font-size="10.4" fill="#444" stroke="#444" stroke-width=".2">ab</text><text x="1275.6" y="118.2" font-family="Liberation Sans" font-size="10.4" fill="#444" stroke="#444" stroke-width=".2">c</text><path d="M1287.4 112.6v3.2h-4.4M1284.6 114.2l-1.8 1.6 1.8 1.6" fill="none" stroke="#3b78c3" stroke-width="1"/><path d="M1206 129.5H1220M1206 135.5H1220" stroke="#5a5a5a" stroke-width="1" fill="none"/><path d="M1206 132.5H1215.6M1206 138.5H1215.6" stroke="#5a5a5a" stroke-width="1" fill="none"/><path d="M1228 129.5H1242M1228 135.5H1242" stroke="#5a5a5a" stroke-width="1" fill="none"/><path d="M1231 132.5H1239M1231 138.5H1239" stroke="#5a5a5a" stroke-width="1" fill="none"/><path d="M1250 129.5H1264M1250 135.5H1264" stroke="#5a5a5a" stroke-width="1" fill="none"/><path d="M1254.4 132.5H1264M1254.4 138.5H1264" stroke="#5a5a5a" stroke-width="1" fill="none"/><g fill="none" stroke="#6a6a6a" stroke-width="1"><rect x="1274.5" y="126.5" width="14" height="14"/><path d="M1274.5 130.5h14M1274.5 136.5h14M1281.5 126.5v4M1281.5 136.5v4"/></g><path d="M1276.6 133.5h9.8M1278.4 131.7l-1.8 1.8 1.8 1.8M1284.6 131.7l1.8 1.8-1.8 1.8" fill="none" stroke="#3b78c3" stroke-width="1"/><path d="M1295.6 133h5.4l-2.7 3.2z" fill="#555"/><path d="M1205 150.5H1221M1205 162.5H1221" stroke="#5a5a5a" stroke-width="1" fill="none"/><path d="M1213 153.5H1221M1213 156.5H1221M1213 159.5H1221" stroke="#5a5a5a" stroke-width="1" fill="none"/><path d="M1211.5 156.5h-5.6M1208.4 154l-2.5 2.5 2.5 2.5" fill="none" stroke="#3b78c3" stroke-width="1.2"/><path d="M1227 150.5H1243M1227 162.5H1243" stroke="#5a5a5a" stroke-width="1" fill="none"/><path d="M1235 153.5H1243M1235 156.5H1243M1235 159.5H1243" stroke="#5a5a5a" stroke-width="1" fill="none"/><path d="M1227.4 156.5h5.6M1230.5 154l2.5 2.5-2.5 2.5" fill="none" stroke="#3b78c3" stroke-width="1.2"/><g transform="rotate(-45 1264 157)"><text x="1257" y="157.8" font-family="Liberation Sans" font-size="10.4" fill="#444" stroke="#444" stroke-width=".2">ab</text></g><path d="M1265 163.6L1273.8 154.8M1270.4 154.6h3.6v3.6" fill="none" stroke="#5a5a5a" stroke-width="1"/><path d="M1278 155.6h5.4l-2.7 3.2z" fill="#555"/><path d="M1302.5 184V177.5H1309M1305 180l4.6 4.6M1309.6 181v3.6h-3.6" fill="none" stroke="#666" stroke-width="1"/><text x="1329.2" y="140.4" font-family="Liberation Sans" font-size="15" fill="#444">$</text><path d="M1346.8 133h5.2l-2.6 3z" fill="#555"/><text x="1360.6" y="140" font-family="Liberation Sans" font-size="14.5" fill="#444">%</text><circle cx="1388.7" cy="132" r="1.9" fill="#444"/><path d="M1390.6 131.6c.3 2.7-1 4.7-3.9 5.9l-.3-.7c1.6-.9 2.3-1.9 2.3-3.4z" fill="#444"/><text x="1331" y="156.4" font-family="Liberation Sans" font-size="8" fill="#444">.0</text><text x="1326.4" y="163.2" font-family="Liberation Sans" font-size="8" fill="#444">.00</text><path d="M1330.6 153.4h-5.2M1327.6 151.4l-2.2 2 2.2 2" fill="none" stroke="#3b78c3" stroke-width="1.1"/><text x="1349.6" y="156.4" font-family="Liberation Sans" font-size="8" fill="#444">.00</text><text x="1354.4" y="163.2" font-family="Liberation Sans" font-size="8" fill="#444">.0</text><path d="M1347 160.4h5.2M1350 158.4l2.2 2-2.2 2" fill="none" stroke="#3b78c3" stroke-width="1.1"/><path d="M1396.3 184V177.5H1402.8M1398.8 180l4.6 4.6M1403.3999999999999 181v3.6h-3.6" fill="none" stroke="#666" stroke-width="1"/><g><rect x="1419.5" y="103.5" width="12" height="11" fill="#fff" stroke="#7a7a7a" stroke-width="1"/><rect x="1420" y="104" width="4.6" height="3" fill="#d9482b"/><rect x="1420" y="107.6" width="7.6" height="3" fill="#3b78c3"/><rect x="1420" y="111.2" width="3.4" height="3" fill="#d9482b"/><path d="M1425 104v3M1428.4 104v7" stroke="#9a9a9a" stroke-width=".8"/><rect x="1425.5" y="109.5" width="9.4" height="8.6" fill="#fff" stroke="#5a5a5a" stroke-width="1"/><path d="M1427.6 112.6h5.2M1427.6 115h5.2M1431.6 111.2l-2.4 5.2" stroke="#444" stroke-width=".9"/></g><g><rect x="1419.5" y="126.5" width="14" height="10.6" fill="#fff" stroke="#7a7a7a" stroke-width="1"/><rect x="1423" y="130" width="10.4" height="7" fill="#bcd4ee"/><path d="M1419.5 130h14M1419.5 133.5h14M1423 126.5v10.6M1426.5 126.5v10.6M1430 126.5v10.6" stroke="#8a8a8a" stroke-width=".9" fill="none"/><path d="M1435.6 129.4L1429.4 137L1427.6 135.6L1433.6 128Z" fill="#6d6d6d"/><path d="M1428.8 136.4c-2.4.4-2.6 3-5.2 4.8c3.6.6 6.4-.8 7-3.4Z" fill="#3b78c3"/></g><g><rect x="1419.5" y="149.5" width="14" height="10.6" fill="#fff" stroke="#7a7a7a" stroke-width="1"/><rect x="1420" y="153" width="13.4" height="7" fill="#c9dcf0"/><path d="M1419.5 153h14M1419.5 156.5h14M1423 149.5v10.6" stroke="#8a8a8a" stroke-width=".9" fill="none"/><path d="M1435.6 152.4L1429.4 160L1427.6 158.6L1433.6 151Z" fill="#6d6d6d"/><path d="M1428.8 159.4c-2.4.4-2.6 3-5.2 4.8c3.6.6 6.4-.8 7-3.4Z" fill="#3b78c3"/></g><path d="M1564.6 109.8h5.2l-2.6 3z" fill="#555"/><path d="M1523.6 133h5.2l-2.6 3z" fill="#555"/><path d="M1494 156h5.2l-2.6 3z" fill="#555"/><g fill="#fff" stroke="#6d6d6d" stroke-width="1"><rect x="1596.5" y="103.5" width="4" height="3.4"/><rect x="1600.5" y="103.5" width="4" height="3.4"/><rect x="1596.5" y="114.5" width="4" height="3.6"/><rect x="1600.5" y="114.5" width="4" height="3.6"/><rect x="1596.5" y="110.9" width="4" height="3.6"/></g><rect x="1603.5" y="107.4" width="8.6" height="3.2" fill="#bcd4ee" stroke="#6d6d6d" stroke-width="1"/><path d="M1607.8 107.4v3.2" stroke="#6d6d6d" stroke-width=".9"/><path d="M1602.4 109h-5.6M1599.4 106.6l-2.6 2.4 2.6 2.4" fill="none" stroke="#3b78c3" stroke-width="1.3"/><g fill="#fff" stroke="#6d6d6d" stroke-width="1"><rect x="1596.5" y="126.5" width="4" height="3.4"/><rect x="1600.5" y="126.5" width="4" height="3.4"/><rect x="1596.5" y="137.5" width="4" height="3.6"/><rect x="1600.5" y="137.5" width="4" height="3.6"/><rect x="1596.5" y="133.9" width="4" height="3.6"/></g><rect x="1600.5" y="130.4" width="4" height="3.4" fill="#bcd4ee" stroke="#6d6d6d" stroke-width="1"/><path d="M1605.4 128.4l6 6.4M1611.4 128.4l-6 6.4" stroke="#e0603c" stroke-width="1.4"/><path d="M1596.4 151h12.4M1596.6 149.2v3.6M1608.6 149.2v3.6M1598.6 149.6l-1.6 1.4 1.6 1.4M1606.6 149.6l1.6 1.4-1.6 1.4" fill="none" stroke="#3b78c3" stroke-width="1"/><rect x="1596.5" y="154.5" width="14" height="9.4" fill="#fff" stroke="#6d6d6d" stroke-width="1"/><path d="M1596.5 157.6h14M1596.5 160.8h14M1600 154.5v9.4M1604.6 154.5v9.4M1607.6 154.5v9.4" stroke="#8a8a8a" stroke-width=".8" fill="none"/><rect x="1599.4" y="157" width="4.6" height="4" fill="#3b78c3"/><path d="M1597 165h13" stroke="#6d6d6d" stroke-width="1"/><path d="M1654 110h5.2l-2.6 3z" fill="#555"/><path d="M1657.6 133h5.2l-2.6 3z" fill="#555"/><path d="M1656 156h5.2l-2.6 3z" fill="#555"/><path d="M1701.6 106v-2.4h-14l7 7-7 7h14v-2.4" fill="none" stroke="#444" stroke-width="1.8"/><path d="M1708.6 110h5.2l-2.6 3z" fill="#555"/><text x="1722.6" y="110" font-family="Liberation Sans" font-weight="700" font-size="8.6" fill="#3b78c3">A</text><text x="1722.8" y="118.6" font-family="Liberation Sans" font-weight="700" font-size="8.6" fill="#8a4fb0">Z</text><path d="M1730.6 108h7.8l-2.9 3.3v3.6l-2 .1v-3.7z" fill="#6d6d6d"/><path d="M1742 110h5.2l-2.6 3z" fill="#555"/><rect x="1688.3" y="126.5" width="13.4" height="15" fill="#fff" stroke="#6d6d6d" stroke-width="1"/><rect x="1688" y="126" width="14" height="3.6" fill="#7a7a7a"/><path d="M1695 131.6v7.4M1691.6 136l3.4 3.4 3.4-3.4" fill="none" stroke="#3b78c3" stroke-width="1.6"/><path d="M1706.8 133h5.2l-2.6 3z" fill="#555"/><circle cx="1731.2" cy="132.6" r="3.9" fill="none" stroke="#3b78c3" stroke-width="1.5"/><path d="M1728.4 135.6l-5 4.6" stroke="#3b78c3" stroke-width="2"/><path d="M1742 133h5.2l-2.6 3z" fill="#555"/><path d="M1688 158.6l8.6-8.4 4.4 4.6-8.4 8.2z" fill="#ee8a9c"/><path d="M1688 158.6l2.2-2.2 4.6 4.6-2.2 2z" fill="#f6c3cc"/><path d="M1706.8 156h5.2l-2.6 3z" fill="#555"/><path d="M1808.6 185l5.2-5 5.2 5" fill="none" stroke="#444" stroke-width="1.1"/><path d="M980.2 210.4h6.4l-3.2 3.6z" fill="#666"/><g fill="#8a8a8a"><circle cx="1009" cy="208.8" r=".8"/><circle cx="1009" cy="213.2" r=".8"/><circle cx="1009" cy="217.6" r=".8"/></g><path d="M1038.6 208.4l9.2 9.2M1047.8 208.4l-9.2 9.2" stroke="#b0b0b0" stroke-width="1.5"/><path d="M1073.6 213.6l3.6 4 7.6-9.6" fill="none" stroke="#b8b8b8" stroke-width="1.8"/><text x="1109.2" y="217" font-family="Liberation Serif" font-style="italic" font-weight="700" font-size="14" fill="#444">f</text><text x="1115" y="217.6" font-family="Liberation Serif" font-style="italic" font-weight="700" font-size="9" fill="#444">x</text><path d="M1810.4 210.4l3.4 3.4 3.4-3.4" fill="none" stroke="#444" stroke-width="1.6"/></svg>
<div style="left:887px;top:237px;width:940px;height:753px;background:#e6e6e6;"></div>
<div style="left:912px;top:255px;width:893px;height:734px;background:#fff;"></div>
<div style="left:912px;top:236px;width:120px;height:18px;background:#d2d2d2;"></div>
<div style="left:887px;top:254px;width:918px;height:1px;background:#ababab;"></div>
<svg style="left:896px;top:240px;" width="14" height="13" viewBox="0 0 14 13"><path d="M13 1V12H1Z" fill="#b7b7b7"/></svg>
<div style="left:911px;top:238px;width:1px;height:16px;background:#c9c9c9;"></div>
<div style="left:1031px;top:238px;width:1px;height:16px;background:#c9c9c9;"></div>
<div style="left:1161px;top:238px;width:1px;height:16px;background:#c9c9c9;"></div>
<div style="left:1225px;top:238px;width:1px;height:16px;background:#c9c9c9;"></div>
<div style="left:1289px;top:238px;width:1px;height:16px;background:#c9c9c9;"></div>
<div style="left:1353px;top:238px;width:1px;height:16px;background:#c9c9c9;"></div>
<div style="left:1417px;top:238px;width:1px;height:16px;background:#c9c9c9;"></div>
<div style="left:1481px;top:238px;width:1px;height:16px;background:#c9c9c9;"></div>
<div style="left:1545px;top:238px;width:1px;height:16px;background:#c9c9c9;"></div>
<div style="left:1609px;top:238px;width:1px;height:16px;background:#c9c9c9;"></div>
<div style="left:1673px;top:238px;width:1px;height:16px;background:#c9c9c9;"></div>
<div style="left:1737px;top:238px;width:1px;height:16px;background:#c9c9c9;"></div>
<div style="left:1801px;top:238px;width:1px;height:16px;background:#c9c9c9;"></div>
<span id="t100" class="t" style="left:967.5px;top:237.00px;line-height:18px;font-size:12.5px;color:#217346;font-family:'Liberation Sans',sans-serif;width:9px;text-align:center;">A</span>
<span id="t101" class="t" style="left:1092.0px;top:237.00px;line-height:18px;font-size:12.5px;color:#262626;font-family:'Liberation Sans',sans-serif;width:9px;text-align:center;">B</span>
<span id="t102" class="t" style="left:1189.0px;top:237.00px;line-height:18px;font-size:12.5px;color:#262626;font-family:'Liberation Sans',sans-serif;width:9px;text-align:center;">C</span>
<span id="t103" class="t" style="left:1253.0px;top:237.00px;line-height:18px;font-size:12.5px;color:#262626;font-family:'Liberation Sans',sans-serif;width:9px;text-align:center;">D</span>
<span id="t104" class="t" style="left:1317.0px;top:237.00px;line-height:18px;font-size:12.5px;color:#262626;font-family:'Liberation Sans',sans-serif;width:9px;text-align:center;">E</span>
<span id="t105" class="t" style="left:1381.0px;top:237.00px;line-height:18px;font-size:12.5px;color:#262626;font-family:'Liberation Sans',sans-serif;width:9px;text-align:center;">F</span>
<span id="t106" class="t" style="left:1445.0px;top:237.00px;line-height:18px;font-size:12.5px;color:#262626;font-family:'Liberation Sans',sans-serif;width:9px;text-align:center;">G</span>
<span id="t107" class="t" style="left:1509.0px;top:237.00px;line-height:18px;font-size:12.5px;color:#262626;font-family:'Liberation Sans',sans-serif;width:9px;text-align:center;">H</span>
<span id="t108" class="t" style="left:1573.0px;top:237.00px;line-height:18px;font-size:12.5px;color:#262626;font-family:'Liberation Sans',sans-serif;width:9px;text-align:center;">I</span>
<span id="t109" class="t" style="left:1637.0px;top:237.00px;line-height:18px;font-size:12.5px;color:#262626;font-family:'Liberation Sans',sans-serif;width:9px;text-align:center;">J</span>
<span id="t110" class="t" style="left:1701.0px;top:237.00px;line-height:18px;font-size:12.5px;color:#262626;font-family:'Liberation Sans',sans-serif;width:9px;text-align:center;">K</span>
<span id="t111" class="t" style="left:1765.0px;top:237.00px;line-height:18px;font-size:12.5px;color:#262626;font-family:'Liberation Sans',sans-serif;width:9px;text-align:center;">L</span>
<div style="left:1031px;top:255px;width:1px;height:734px;background:#d6d6d6;"></div>
<div style="left:1161px;top:255px;width:1px;height:734px;background:#d6d6d6;"></div>
<div style="left:1225px;top:255px;width:1px;height:734px;background:#d6d6d6;"></div>
<div style="left:1289px;top:255px;width:1px;height:734px;background:#d6d6d6;"></div>
<div style="left:1353px;top:255px;width:1px;height:734px;background:#d6d6d6;"></div>
<div style="left:1417px;top:255px;width:1px;height:734px;background:#d6d6d6;"></div>
<div style="left:1481px;top:255px;width:1px;height:734px;background:#d6d6d6;"></div>
<div style="left:1545px;top:255px;width:1px;height:734px;background:#d6d6d6;"></div>
<div style="left:1609px;top:255px;width:1px;height:734px;background:#d6d6d6;"></div>
<div style="left:1673px;top:255px;width:1px;height:734px;background:#d6d6d6;"></div>
<div style="left:1737px;top:255px;width:1px;height:734px;background:#d6d6d6;"></div>
<div style="left:1801px;top:255px;width:1px;height:734px;background:#d6d6d6;"></div>
<div style="left:1805px;top:255px;width:1px;height:735px;background:#c8c8c8;"></div>
<div style="left:912px;top:276px;width:893px;height:1px;background:#d6d6d6;"></div>
<div style="left:912px;top:297px;width:893px;height:1px;background:#d6d6d6;"></div>
<div style="left:912px;top:318px;width:893px;height:1px;background:#d6d6d6;"></div>
<div style="left:912px;top:339px;width:893px;height:1px;background:#d6d6d6;"></div>
<div style="left:912px;top:360px;width:893px;height:1px;background:#d6d6d6;"></div>
<div style="left:912px;top:381px;width:893px;height:1px;background:#d6d6d6;"></div>
<div style="left:912px;top:402px;width:893px;height:1px;background:#d6d6d6;"></div>
<div style="left:912px;top:423px;width:893px;height:1px;background:#d6d6d6;"></div>
<div style="left:912px;top:444px;width:893px;height:1px;background:#d6d6d6;"></div>
<div style="left:912px;top:465px;width:893px;height:1px;background:#d6d6d6;"></div>
<div style="left:912px;top:486px;width:893px;height:1px;background:#d6d6d6;"></div>
<div style="left:912px;top:507px;width:893px;height:1px;background:#d6d6d6;"></div>
<div style="left:912px;top:528px;width:893px;height:1px;background:#d6d6d6;"></div>
<div style="left:912px;top:549px;width:893px;height:1px;background:#d6d6d6;"></div>
<div style="left:912px;top:570px;width:893px;height:1px;background:#d6d6d6;"></div>
<div style="left:912px;top:591px;width:893px;height:1px;background:#d6d6d6;"></div>
<div style="left:912px;top:612px;width:893px;height:1px;background:#d6d6d6;"></div>
<div style="left:912px;top:633px;width:893px;height:1px;background:#d6d6d6;"></div>
<div style="left:912px;top:654px;width:893px;height:1px;background:#d6d6d6;"></div>
<div style="left:912px;top:675px;width:893px;height:1px;background:#d6d6d6;"></div>
<div style="left:912px;top:696px;width:893px;height:1px;background:#d6d6d6;"></div>
<div style="left:912px;top:717px;width:893px;height:1px;background:#d6d6d6;"></div>
<div style="left:912px;top:738px;width:893px;height:1px;background:#d6d6d6;"></div>
<div style="left:912px;top:759px;width:893px;height:1px;background:#d6d6d6;"></div>
<div style="left:912px;top:780px;width:893px;height:1px;background:#d6d6d6;"></div>
<div style="left:912px;top:801px;width:893px;height:1px;background:#d6d6d6;"></div>
<div style="left:912px;top:822px;width:893px;height:1px;background:#d6d6d6;"></div>
<div style="left:912px;top:843px;width:893px;height:1px;background:#d6d6d6;"></div>
<div style="left:912px;top:864px;width:893px;height:1px;background:#d6d6d6;"></div>
<div style="left:912px;top:885px;width:893px;height:1px;background:#d6d6d6;"></div>
<div style="left:912px;top:906px;width:893px;height:1px;background:#d6d6d6;"></div>
<div style="left:912px;top:927px;width:893px;height:1px;background:#d6d6d6;"></div>
<div style="left:912px;top:948px;width:893px;height:1px;background:#d6d6d6;"></div>
<div style="left:912px;top:969px;width:893px;height:1px;background:#d6d6d6;"></div>
<div style="left:887px;top:255px;width:25px;height:21px;background:#d2d2d2;"></div>
<div style="left:912px;top:255px;width:1px;height:734px;background:#b4b4b4;"></div>
<div style="left:887px;top:276px;width:25px;height:1px;background:#a9a9a9;"></div>
<span id="t112" class="t" style="left:893.5px;top:258.90px;line-height:18px;font-size:12.5px;color:#217346;font-family:'Liberation Sans',sans-serif;width:13px;text-align:center;">1</span>
<div style="left:887px;top:297px;width:25px;height:1px;background:#a9a9a9;"></div>
<span id="t113" class="t" style="left:893.5px;top:279.90px;line-height:18px;font-size:12.5px;color:#262626;font-family:'Liberation Sans',sans-serif;width:13px;text-align:center;">2</span>
<div style="left:887px;top:318px;width:25px;height:1px;background:#a9a9a9;"></div>
<span id="t114" class="t" style="left:893.5px;top:300.90px;line-height:18px;font-size:12.5px;color:#262626;font-family:'Liberation Sans',sans-serif;width:13px;text-align:center;">3</span>
<div style="left:887px;top:339px;width:25px;height:1px;background:#a9a9a9;"></div>
<span id="t115" class="t" style="left:893.5px;top:321.90px;line-height:18px;font-size:12.5px;color:#262626;font-family:'Liberation Sans',sans-serif;width:13px;text-align:center;">4</span>
<div style="left:887px;top:360px;width:25px;height:1px;background:#a9a9a9;"></div>
<span id="t116" class="t" style="left:893.5px;top:342.90px;line-height:18px;font-size:12.5px;color:#262626;font-family:'Liberation Sans',sans-serif;width:13px;text-align:center;">5</span>
<div style="left:887px;top:381px;width:25px;height:1px;background:#a9a9a9;"></div>
<span id="t117" class="t" style="left:893.5px;top:363.90px;line-height:18px;font-size:12.5px;color:#262626;font-family:'Liberation Sans',sans-serif;width:13px;text-align:center;">6</span>
<div style="left:887px;top:402px;width:25px;height:1px;background:#a9a9a9;"></div>
<span id="t118" class="t" style="left:893.5px;top:384.90px;line-height:18px;font-size:12.5px;color:#262626;font-family:'Liberation Sans',sans-serif;width:13px;text-align:center;">7</span>
<div style="left:887px;top:423px;width:25px;height:1px;background:#a9a9a9;"></div>
<span id="t119" class="t" style="left:893.5px;top:405.90px;line-height:18px;font-size:12.5px;color:#262626;font-family:'Liberation Sans',sans-serif;width:13px;text-align:center;">8</span>
<div style="left:887px;top:444px;width:25px;height:1px;background:#a9a9a9;"></div>
<span id="t120" class="t" style="left:893.5px;top:426.90px;line-height:18px;font-size:12.5px;color:#262626;font-family:'Liberation Sans',sans-serif;width:13px;text-align:center;">9</span>
<div style="left:887px;top:465px;width:25px;height:1px;background:#a9a9a9;"></div>
<span id="t121" class="t" style="left:893.5px;top:447.90px;line-height:18px;font-size:12.5px;color:#262626;font-family:'Liberation Sans',sans-serif;width:13px;text-align:center;letter-spacing:-0.1px;">10</span>
<div style="left:887px;top:486px;width:25px;height:1px;background:#a9a9a9;"></div>
<span id="t122" class="t" style="left:893.5px;top:468.90px;line-height:18px;font-size:12.5px;color:#262626;font-family:'Liberation Sans',sans-serif;width:13px;text-align:center;letter-spacing:-0.1px;">11</span>
<div style="left:887px;top:507px;width:25px;height:1px;background:#a9a9a9;"></div>
<span id="t123" class="t" style="left:893.5px;top:489.90px;line-height:18px;font-size:12.5px;color:#262626;font-family:'Liberation Sans',sans-serif;width:13px;text-align:center;letter-spacing:-0.1px;">12</span>
<div style="left:887px;top:528px;width:25px;height:1px;background:#a9a9a9;"></div>
<span id="t124" class="t" style="left:893.5px;top:510.90px;line-height:18px;font-size:12.5px;color:#262626;font-family:'Liberation Sans',sans-serif;width:13px;text-align:center;letter-spacing:-0.1px;">13</span>
<div style="left:887px;top:549px;width:25px;height:1px;background:#a9a9a9;"></div>
<span id="t125" class="t" style="left:893.5px;top:531.90px;line-height:18px;font-size:12.5px;color:#262626;font-family:'Liberation Sans',sans-serif;width:13px;text-align:center;letter-spacing:-0.1px;">14</span>
<div style="left:887px;top:570px;width:25px;height:1px;background:#a9a9a9;"></div>
<span id="t126" class="t" style="left:893.5px;top:552.90px;line-height:18px;font-size:12.5px;color:#262626;font-family:'Liberation Sans',sans-serif;width:13px;text-align:center;letter-spacing:-0.1px;">15</span>
<div style="left:887px;top:591px;width:25px;height:1px;background:#a9a9a9;"></div>
<span id="t127" class="t" style="left:893.5px;top:573.90px;line-height:18px;font-size:12.5px;color:#262626;font-family:'Liberation Sans',sans-serif;width:13px;text-align:center;letter-spacing:-0.1px;">16</span>
<div style="left:887px;top:612px;width:25px;height:1px;background:#a9a9a9;"></div>
<span id="t128" class="t" style="left:893.5px;top:594.90px;line-height:18px;font-size:12.5px;color:#262626;font-family:'Liberation Sans',sans-serif;width:13px;text-align:center;letter-spacing:-0.1px;">17</span>
<div style="left:887px;top:633px;width:25px;height:1px;background:#a9a9a9;"></div>
<span id="t129" class="t" style="left:893.5px;top:615.90px;line-height:18px;font-size:12.5px;color:#262626;font-family:'Liberation Sans',sans-serif;width:13px;text-align:center;letter-spacing:-0.1px;">18</span>
<div style="left:887px;top:654px;width:25px;height:1px;background:#a9a9a9;"></div>
<span id="t130" class="t" style="left:893.5px;top:636.90px;line-height:18px;font-size:12.5px;color:#262626;font-family:'Liberation Sans',sans-serif;width:13px;text-align:center;letter-spacing:-0.1px;">19</span>
<div style="left:887px;top:675px;width:25px;height:1px;background:#a9a9a9;"></div>
<span id="t131" class="t" style="left:893.5px;top:657.90px;line-height:18px;font-size:12.5px;color:#262626;font-family:'Liberation Sans',sans-serif;width:13px;text-align:center;letter-spacing:-0.1px;">20</span>
<div style="left:887px;top:696px;width:25px;height:1px;background:#a9a9a9;"></div>
<span id="t132" class="t" style="left:893.5px;top:678.90px;line-height:18px;font-size:12.5px;color:#262626;font-family:'Liberation Sans',sans-serif;width:13px;text-align:center;letter-spacing:-0.1px;">21</span>
<div style="left:887px;top:717px;width:25px;height:1px;background:#a9a9a9;"></div>
<span id="t133" class="t" style="left:893.5px;top:699.90px;line-height:18px;font-size:12.5px;color:#262626;font-family:'Liberation Sans',sans-serif;width:13px;text-align:center;letter-spacing:-0.1px;">22</span>
<div style="left:887px;top:738px;width:25px;height:1px;background:#a9a9a9;"></div>
<span id="t134" class="t" style="left:893.5px;top:720.90px;line-height:18px;font-size:12.5px;color:#262626;font-family:'Liberation Sans',sans-serif;width:13px;text-align:center;letter-spacing:-0.1px;">23</span>
<div style="left:887px;top:759px;width:25px;height:1px;background:#a9a9a9;"></div>
<span id="t135" class="t" style="left:893.5px;top:741.90px;line-height:18px;font-size:12.5px;color:#262626;font-family:'Liberation Sans',sans-serif;width:13px;text-align:center;letter-spacing:-0.1px;">24</span>
<div style="left:887px;top:780px;width:25px;height:1px;background:#a9a9a9;"></div>
<span id="t136" class="t" style="left:893.5px;top:762.90px;line-height:18px;font-size:12.5px;color:#262626;font-family:'Liberation Sans',sans-serif;width:13px;text-align:center;letter-spacing:-0.1px;">25</span>
<div style="left:887px;top:801px;width:25px;height:1px;background:#a9a9a9;"></div>
<span id="t137" class="t" style="left:893.5px;top:783.90px;line-height:18px;font-size:12.5px;color:#262626;font-family:'Liberation Sans',sans-serif;width:13px;text-align:center;letter-spacing:-0.1px;">26</span>
<div style="left:887px;top:822px;width:25px;height:1px;background:#a9a9a9;"></div>
<span id="t138" class="t" style="left:893.5px;top:804.90px;line-height:18px;font-size:12.5px;color:#262626;font-family:'Liberation Sans',sans-serif;width:13px;text-align:center;letter-spacing:-0.1px;">27</span>
<div style="left:887px;top:843px;width:25px;height:1px;background:#a9a9a9;"></div>
<span id="t139" class="t" style="left:893.5px;top:825.90px;line-height:18px;font-size:12.5px;color:#262626;font-family:'Liberation Sans',sans-serif;width:13px;text-align:center;letter-spacing:-0.1px;">28</span>
<div style="left:887px;top:864px;width:25px;height:1px;background:#a9a9a9;"></div>
<span id="t140" class="t" style="left:893.5px;top:846.90px;line-height:18px;font-size:12.5px;color:#262626;font-family:'Liberation Sans',sans-serif;width:13px;text-align:center;letter-spacing:-0.1px;">29</span>
<div style="left:887px;top:885px;width:25px;height:1px;background:#a9a9a9;"></div>
<span id="t141" class="t" style="left:893.5px;top:867.90px;line-height:18px;font-size:12.5px;color:#262626;font-family:'Liberation Sans',sans-serif;width:13px;text-align:center;letter-spacing:-0.1px;">30</span>
<div style="left:887px;top:906px;width:25px;height:1px;background:#a9a9a9;"></div>
<span id="t142" class="t" style="left:893.5px;top:888.90px;line-height:18px;font-size:12.5px;color:#262626;font-family:'Liberation Sans',sans-serif;width:13px;text-align:center;letter-spacing:-0.1px;">31</span>
<div style="left:887px;top:927px;width:25px;height:1px;background:#a9a9a9;"></div>
<span id="t143" class="t" style="left:893.5px;top:909.90px;line-height:18px;font-size:12.5px;color:#262626;font-family:'Liberation Sans',sans-serif;width:13px;text-align:center;letter-spacing:-0.1px;">32</span>
<div style="left:887px;top:948px;width:25px;height:1px;background:#a9a9a9;"></div>
<span id="t144" class="t" style="left:893.5px;top:930.90px;line-height:18px;font-size:12.5px;color:#262626;font-family:'Liberation Sans',sans-serif;width:13px;text-align:center;letter-spacing:-0.1px;">33</span>
<div style="left:887px;top:969px;width:25px;height:1px;background:#a9a9a9;"></div>
<span id="t145" class="t" style="left:893.5px;top:951.90px;line-height:18px;font-size:12.5px;color:#262626;font-family:'Liberation Sans',sans-serif;width:13px;text-align:center;letter-spacing:-0.1px;">34</span>
<span id="t146" class="t" style="left:893.5px;top:972.90px;line-height:18px;font-size:12.5px;color:#262626;font-family:'Liberation Sans',sans-serif;width:13px;text-align:center;letter-spacing:-0.1px;">35</span>
<div style="left:1032px;top:255px;width:129px;height:21px;background:#19327f;"></div>
<div style="left:912px;top:255px;width:119px;height:21px;background:#19327f;"></div>
<span id="t147" class="t" style="left:916px;top:255.00px;line-height:23px;font-size:16px;color:#fff;font-family:'Liberation Serif',serif;font-weight:700;letter-spacing:-0.113px;">DateTime</span>
<span id="t148" class="t" style="left:1035px;top:255.00px;line-height:23px;font-size:16px;color:#fff;font-family:'Liberation Serif',serif;font-weight:700;letter-spacing:-0.013px;">*Cast Wheel Mps</span>
<div style="left:911px;top:254px;width:122px;height:24px;border:2px solid #217346;box-shadow:inset 0 0 0 1px #fff;"></div>
<div style="left:1028px;top:273px;width:6px;height:6px;background:#fff;"></div>
<div style="left:1029px;top:274px;width:5px;height:5px;background:#217346;"></div>
<span id="t149" class="t" style="left:916px;top:276.00px;line-height:23px;font-size:16px;color:#000;font-family:'Liberation Serif',serif;letter-spacing:-0.272px;">12/10/2024 0:00</span>
<span id="t150" class="t" style="left:1035px;top:276.00px;line-height:23px;font-size:16px;color:#000;font-family:'Liberation Serif',serif;letter-spacing:-0.467px;">0.177</span>
<span id="t151" class="t" style="left:916px;top:297.00px;line-height:23px;font-size:16px;color:#000;font-family:'Liberation Serif',serif;letter-spacing:-0.272px;">12/10/2024 0:00</span>
<span id="t152" class="t" style="left:1035px;top:297.00px;line-height:23px;font-size:16px;color:#000;font-family:'Liberation Serif',serif;letter-spacing:-0.467px;">0.177</span>
<span id="t153" class="t" style="left:916px;top:318.00px;line-height:23px;font-size:16px;color:#000;font-family:'Liberation Serif',serif;letter-spacing:-0.272px;">12/10/2024 0:00</span>
<span id="t154" class="t" style="left:1035px;top:318.00px;line-height:23px;font-size:16px;color:#000;font-family:'Liberation Serif',serif;letter-spacing:-0.467px;">0.177</span>
<span id="t155" class="t" style="left:916px;top:339.00px;line-height:23px;font-size:16px;color:#000;font-family:'Liberation Serif',serif;letter-spacing:-0.272px;">12/10/2024 0:00</span>
<span id="t156" class="t" style="left:1035px;top:339.00px;line-height:23px;font-size:16px;color:#000;font-family:'Liberation Serif',serif;letter-spacing:-0.467px;">0.177</span>
<span id="t157" class="t" style="left:916px;top:360.00px;line-height:23px;font-size:16px;color:#000;font-family:'Liberation Serif',serif;letter-spacing:-0.272px;">12/10/2024 0:00</span>
<span id="t158" class="t" style="left:1035px;top:360.00px;line-height:23px;font-size:16px;color:#000;font-family:'Liberation Serif',serif;letter-spacing:-0.467px;">0.177</span>
<span id="t159" class="t" style="left:916px;top:381.00px;line-height:23px;font-size:16px;color:#000;font-family:'Liberation Serif',serif;letter-spacing:-0.272px;">12/10/2024 0:00</span>
<span id="t160" class="t" style="left:1035px;top:381.00px;line-height:23px;font-size:16px;color:#000;font-family:'Liberation Serif',serif;letter-spacing:-0.467px;">0.177</span>
<span id="t161" class="t" style="left:916px;top:402.00px;line-height:23px;font-size:16px;color:#000;font-family:'Liberation Serif',serif;letter-spacing:-0.272px;">12/10/2024 0:00</span>
<span id="t162" class="t" style="left:1035px;top:402.00px;line-height:23px;font-size:16px;color:#000;font-family:'Liberation Serif',serif;letter-spacing:-0.467px;">0.177</span>
<span id="t163" class="t" style="left:916px;top:423.00px;line-height:23px;font-size:16px;color:#000;font-family:'Liberation Serif',serif;letter-spacing:-0.272px;">12/10/2024 0:00</span>
<span id="t164" class="t" style="left:1035px;top:423.00px;line-height:23px;font-size:16px;color:#000;font-family:'Liberation Serif',serif;letter-spacing:-0.467px;">0.177</span>
<span id="t165" class="t" style="left:916px;top:444.00px;line-height:23px;font-size:16px;color:#000;font-family:'Liberation Serif',serif;letter-spacing:-0.272px;">12/10/2024 0:00</span>
<span id="t166" class="t" style="left:1035px;top:444.00px;line-height:23px;font-size:16px;color:#000;font-family:'Liberation Serif',serif;letter-spacing:-0.467px;">0.177</span>
<span id="t167" class="t" style="left:916px;top:465.00px;line-height:23px;font-size:16px;color:#000;font-family:'Liberation Serif',serif;letter-spacing:-0.272px;">12/10/2024 0:00</span>
<span id="t168" class="t" style="left:1035px;top:465.00px;line-height:23px;font-size:16px;color:#000;font-family:'Liberation Serif',serif;letter-spacing:-0.467px;">0.177</span>
<span id="t169" class="t" style="left:916px;top:486.00px;line-height:23px;font-size:16px;color:#000;font-family:'Liberation Serif',serif;letter-spacing:-0.272px;">12/10/2024 0:00</span>
<span id="t170" class="t" style="left:1035px;top:486.00px;line-height:23px;font-size:16px;color:#000;font-family:'Liberation Serif',serif;letter-spacing:-0.467px;">0.177</span>
<span id="t171" class="t" style="left:916px;top:507.00px;line-height:23px;font-size:16px;color:#000;font-family:'Liberation Serif',serif;letter-spacing:-0.272px;">12/10/2024 0:00</span>
<span id="t172" class="t" style="left:1035px;top:507.00px;line-height:23px;font-size:16px;color:#000;font-family:'Liberation Serif',serif;letter-spacing:-0.467px;">0.177</span>
<span id="t173" class="t" style="left:916px;top:528.00px;line-height:23px;font-size:16px;color:#000;font-family:'Liberation Serif',serif;letter-spacing:-0.272px;">12/10/2024 0:00</span>
<span id="t174" class="t" style="left:1035px;top:528.00px;line-height:23px;font-size:16px;color:#000;font-family:'Liberation Serif',serif;letter-spacing:-0.467px;">0.177</span>
<span id="t175" class="t" style="left:916px;top:549.00px;line-height:23px;font-size:16px;color:#000;font-family:'Liberation Serif',serif;letter-spacing:-0.272px;">12/10/2024 0:00</span>
<span id="t176" class="t" style="left:1035px;top:549.00px;line-height:23px;font-size:16px;color:#000;font-family:'Liberation Serif',serif;letter-spacing:-0.467px;">0.177</span>
<span id="t177" class="t" style="left:916px;top:570.00px;line-height:23px;font-size:16px;color:#000;font-family:'Liberation Serif',serif;letter-spacing:-0.272px;">12/10/2024 0:00</span>
<span id="t178" class="t" style="left:1035px;top:570.00px;line-height:23px;font-size:16px;color:#000;font-family:'Liberation Serif',serif;letter-spacing:-0.467px;">0.177</span>
<span id="t179" class="t" style="left:916px;top:591.00px;line-height:23px;font-size:16px;color:#000;font-family:'Liberation Serif',serif;letter-spacing:-0.272px;">12/10/2024 0:00</span>
<span id="t180" class="t" style="left:1035px;top:591.00px;line-height:23px;font-size:16px;color:#000;font-family:'Liberation Serif',serif;letter-spacing:-0.467px;">0.177</span>
<span id="t181" class="t" style="left:916px;top:612.00px;line-height:23px;font-size:16px;color:#000;font-family:'Liberation Serif',serif;letter-spacing:-0.272px;">12/10/2024 0:00</span>
<span id="t182" class="t" style="left:1035px;top:612.00px;line-height:23px;font-size:16px;color:#000;font-family:'Liberation Serif',serif;letter-spacing:-0.467px;">0.177</span>
<span id="t183" class="t" style="left:916px;top:633.00px;line-height:23px;font-size:16px;color:#000;font-family:'Liberation Serif',serif;letter-spacing:-0.272px;">12/10/2024 0:00</span>
<span id="t184" class="t" style="left:1035px;top:633.00px;line-height:23px;font-size:16px;color:#000;font-family:'Liberation Serif',serif;letter-spacing:-0.467px;">0.177</span>
<span id="t185" class="t" style="left:916px;top:654.00px;line-height:23px;font-size:16px;color:#000;font-family:'Liberation Serif',serif;letter-spacing:-0.272px;">12/10/2024 0:00</span>
<span id="t186" class="t" style="left:1035px;top:654.00px;line-height:23px;font-size:16px;color:#000;font-family:'Liberation Serif',serif;letter-spacing:-0.467px;">0.177</span>
<span id="t187" class="t" style="left:916px;top:675.00px;line-height:23px;font-size:16px;color:#000;font-family:'Liberation Serif',serif;letter-spacing:-0.272px;">12/10/2024 0:00</span>
<span id="t188" class="t" style="left:1035px;top:675.00px;line-height:23px;font-size:16px;color:#000;font-family:'Liberation Serif',serif;letter-spacing:-0.467px;">0.177</span>
<span id="t189" class="t" style="left:916px;top:696.00px;line-height:23px;font-size:16px;color:#000;font-family:'Liberation Serif',serif;letter-spacing:-0.272px;">12/10/2024 0:00</span>
<span id="t190" class="t" style="left:1035px;top:696.00px;line-height:23px;font-size:16px;color:#000;font-family:'Liberation Serif',serif;letter-spacing:-0.467px;">0.177</span>
<span id="t191" class="t" style="left:916px;top:717.00px;line-height:23px;font-size:16px;color:#000;font-family:'Liberation Serif',serif;letter-spacing:-0.272px;">12/10/2024 0:00</span>
<span id="t192" class="t" style="left:1035px;top:717.00px;line-height:23px;font-size:16px;color:#000;font-family:'Liberation Serif',serif;letter-spacing:-0.467px;">0.177</span>
<span id="t193" class="t" style="left:916px;top:738.00px;line-height:23px;font-size:16px;color:#000;font-family:'Liberation Serif',serif;letter-spacing:-0.272px;">12/10/2024 0:00</span>
<span id="t194" class="t" style="left:1035px;top:738.00px;line-height:23px;font-size:16px;color:#000;font-family:'Liberation Serif',serif;letter-spacing:-0.467px;">0.177</span>
<span id="t195" class="t" style="left:916px;top:759.00px;line-height:23px;font-size:16px;color:#000;font-family:'Liberation Serif',serif;letter-spacing:-0.272px;">12/10/2024 0:00</span>
<span id="t196" class="t" style="left:1035px;top:759.00px;line-height:23px;font-size:16px;color:#000;font-family:'Liberation Serif',serif;letter-spacing:-0.467px;">0.177</span>
<span id="t197" class="t" style="left:916px;top:780.00px;line-height:23px;font-size:16px;color:#000;font-family:'Liberation Serif',serif;letter-spacing:-0.272px;">12/10/2024 0:00</span>
<span id="t198" class="t" style="left:1035px;top:780.00px;line-height:23px;font-size:16px;color:#000;font-family:'Liberation Serif',serif;letter-spacing:-0.467px;">0.177</span>
<span id="t199" class="t" style="left:916px;top:801.00px;line-height:23px;font-size:16px;color:#000;font-family:'Liberation Serif',serif;letter-spacing:-0.272px;">12/10/2024 0:00</span>
<span id="t200" class="t" style="left:1035px;top:801.00px;line-height:23px;font-size:16px;color:#000;font-family:'Liberation Serif',serif;letter-spacing:-0.467px;">0.177</span>
<span id="t201" class="t" style="left:916px;top:822.00px;line-height:23px;font-size:16px;color:#000;font-family:'Liberation Serif',serif;letter-spacing:-0.272px;">12/10/2024 0:00</span>
<span id="t202" class="t" style="left:1035px;top:822.00px;line-height:23px;font-size:16px;color:#000;font-family:'Liberation Serif',serif;letter-spacing:-0.467px;">0.177</span>
<span id="t203" class="t" style="left:916px;top:843.00px;line-height:23px;font-size:16px;color:#000;font-family:'Liberation Serif',serif;letter-spacing:-0.272px;">12/10/2024 0:00</span>
<span id="t204" class="t" style="left:1035px;top:843.00px;line-height:23px;font-size:16px;color:#000;font-family:'Liberation Serif',serif;letter-spacing:-0.467px;">0.177</span>
<span id="t205" class="t" style="left:916px;top:864.00px;line-height:23px;font-size:16px;color:#000;font-family:'Liberation Serif',serif;letter-spacing:-0.272px;">12/10/2024 0:00</span>
<span id="t206" class="t" style="left:1035px;top:864.00px;line-height:23px;font-size:16px;color:#000;font-family:'Liberation Serif',serif;letter-spacing:-0.467px;">0.177</span>
<span id="t207" class="t" style="left:916px;top:885.00px;line-height:23px;font-size:16px;color:#000;font-family:'Liberation Serif',serif;letter-spacing:-0.272px;">12/10/2024 0:00</span>
<span id="t208" class="t" style="left:1035px;top:885.00px;line-height:23px;font-size:16px;color:#000;font-family:'Liberation Serif',serif;letter-spacing:-0.467px;">0.177</span>
<span id="t209" class="t" style="left:916px;top:906.00px;line-height:23px;font-size:16px;color:#000;font-family:'Liberation Serif',serif;letter-spacing:-0.272px;">12/10/2024 0:00</span>
<span id="t210" class="t" style="left:1035px;top:906.00px;line-height:23px;font-size:16px;color:#000;font-family:'Liberation Serif',serif;letter-spacing:-0.467px;">0.177</span>
<span id="t211" class="t" style="left:916px;top:927.00px;line-height:23px;font-size:16px;color:#000;font-family:'Liberation Serif',serif;letter-spacing:-0.272px;">12/10/2024 0:00</span>
<span id="t212" class="t" style="left:1035px;top:927.00px;line-height:23px;font-size:16px;color:#000;font-family:'Liberation Serif',serif;letter-spacing:-0.467px;">0.177</span>
<span id="t213" class="t" style="left:916px;top:948.00px;line-height:23px;font-size:16px;color:#000;font-family:'Liberation Serif',serif;letter-spacing:-0.272px;">12/10/2024 0:00</span>
<span id="t214" class="t" style="left:1035px;top:948.00px;line-height:23px;font-size:16px;color:#000;font-family:'Liberation Serif',serif;letter-spacing:-0.467px;">0.177</span>
<span id="t215" class="t" style="left:916px;top:969.00px;line-height:23px;font-size:16px;color:#000;font-family:'Liberation Serif',serif;letter-spacing:-0.272px;">12/10/2024 0:00</span>
<span id="t216" class="t" style="left:1035px;top:969.00px;line-height:23px;font-size:16px;color:#000;font-family:'Liberation Serif',serif;letter-spacing:-0.467px;">0.177</span>
<div style="left:887px;top:990px;width:940px;height:27px;background:#e6e6e6;"></div>
<div style="left:887px;top:989px;width:100px;height:1px;background:#c3c3c3;"></div>
<div style="left:1099px;top:989px;width:707px;height:1px;background:#c3c3c3;"></div>
<div style="left:987px;top:990px;width:112px;height:24px;background:#fff;border-bottom:2px solid #217346;border-left:1px solid #c6c6c6;border-right:1px solid #c6c6c6;"></div>
<span id="t217" class="t" style="left:999px;top:993.60px;line-height:18px;font-size:12.5px;color:#217346;font-family:'Liberation Sans',sans-serif;font-weight:700;letter-spacing:-0.302px;">SCRL Recorder</span>
<svg style="left:910px;top:997px;" width="40" height="12" viewBox="0 0 40 12"><path d="M8 2.5v7L4.5 6Z" fill="#c8c8c8"/><path d="M33 2.5v7L36.5 6Z" fill="#c8c8c8"/></svg>
<svg style="left:1131px;top:994px;" width="18" height="18" viewBox="0 0 18 18"><circle cx="9" cy="9" r="7.6" fill="none" stroke="#6a6a6a" stroke-width="1.2"/><path d="M5 9h8M9 5v8" stroke="#6a6a6a" stroke-width="1.6"/></svg>
<svg style="left:1448px;top:995px;" width="8" height="16" viewBox="0 0 8 16"><circle cx="4" cy="3" r="1" fill="#9a9a9a"/><circle cx="4" cy="8" r="1" fill="#9a9a9a"/><circle cx="4" cy="13" r="1" fill="#9a9a9a"/></svg>
<div style="left:1468px;top:996px;width:337px;height:15px;background:#d4d4d4;"></div>
<div style="left:1468px;top:996px;width:15px;height:15px;background:#fff;border:1px solid #c3c3c3;"></div>
<div style="left:1791px;top:996px;width:15px;height:15px;background:#fff;border:1px solid #c3c3c3;"></div>
<div style="left:1483px;top:996px;width:282px;height:15px;background:#fff;border:1px solid #c3c3c3;"></div>
<svg style="left:1468px;top:996px;" width="15" height="15" viewBox="0 0 15 15"><path d="M9.5 4v7L5.5 7.5Z" fill="#666"/></svg>
<svg style="left:1791px;top:996px;" width="15" height="15" viewBox="0 0 15 15"><path d="M5.5 4v7L9.5 7.5Z" fill="#666"/></svg>
<div style="left:1809px;top:238px;width:15px;height:752px;background:#d4d4d4;"></div>
<div style="left:1809px;top:238px;width:15px;height:15px;background:#fff;border:1px solid #c3c3c3;"></div>
<div style="left:1809px;top:253px;width:15px;height:18px;background:#fff;border:1px solid #c3c3c3;"></div>
<div style="left:1809px;top:975px;width:15px;height:15px;background:#fff;border:1px solid #c3c3c3;"></div>
<svg style="left:1809px;top:238px;" width="15" height="15" viewBox="0 0 15 15"><path d="M4 9.5h7L7.5 5.5Z" fill="#666"/></svg>
<svg style="left:1809px;top:975px;" width="15" height="15" viewBox="0 0 15 15"><path d="M4 5.5h7L7.5 9.5Z" fill="#666"/></svg>
<div style="left:887px;top:1017px;width:940px;height:1px;background:#d0d0d0;"></div>
<div style="left:887px;top:1018px;width:940px;height:21px;background:#f3f3f3;"></div>
<div style="left:1516px;top:1018px;width:38px;height:21px;background:#d2d2d2;"></div>
<svg style="left:1527px;top:1020px;" width="17" height="17" viewBox="0 0 17 17"><g fill="none" stroke="#6a6a6a" stroke-width="1.1"><path d="M2.5 2.5h12v12h-12zM6.5 2.5v12M10.5 2.5v12M2.5 6.5h12M2.5 10.5h12"/></g></svg>
<svg style="left:1567px;top:1020px;" width="17" height="17" viewBox="0 0 17 17"><g fill="none" stroke="#6a6a6a" stroke-width="1.1"><path d="M2.5 2.5h12v12h-12z"/><path d="M5.5 5.5h6v6h-6zM7 7.5h3M7 9.5h3"/></g></svg>
<svg style="left:1607px;top:1020px;" width="17" height="17" viewBox="0 0 17 17"><g fill="none" stroke="#6a6a6a" stroke-width="1.1"><path d="M2.5 2.5h12v12h-12zM6 2.5v6M9.5 2.5v6M2.5 8.5h12"/></g></svg>
<div style="left:1641px;top:1027.5px;width:8px;height:1px;background:#444;"></div>
<div style="left:1653px;top:1027.5px;width:104px;height:1px;background:#b0b0b0;"></div>
<div style="left:1702px;top:1022px;width:4px;height:12px;background:#6f6f6f;"></div>
<svg style="left:1757px;top:1022px;" width="12" height="12" viewBox="0 0 12 12"><path d="M2 6h8M6 2v8" stroke="#444" stroke-width="1"/></svg>
<span id="t218" class="t" style="left:1780px;top:1019.50px;line-height:17px;font-size:11.5px;color:#444;font-family:'Liberation Sans',sans-serif;letter-spacing:-0.863px;">100%</span>
<span id="t219" class="t" style="left:1599.5px;top:944.50px;line-height:27px;font-size:19.5px;color:rgba(125,125,125,0.46);font-family:'Liberation Sans',sans-serif;letter-spacing:0.162px;">Activate Windows</span>
<span id="t220" class="t" style="left:1599.2px;top:970.70px;line-height:20px;font-size:14.2px;color:rgba(125,125,125,0.46);font-family:'Liberation Sans',sans-serif;letter-spacing:0.338px;">Go to Settings to activate Windows.</span>
<div style="left:0px;top:1040px;width:1920px;height:40px;background:#070b13;"></div>
<svg style="left:16px;top:1052px;" width="17" height="17" viewBox="0 0 17 17"><path transform="scale(.965)" d="M0 2.3L6.9 1.3V7.9H0ZM7.7 1.2L16.5 0V7.9H7.7ZM0 8.7H6.9V15.3L0 14.3ZM7.7 8.7H16.5V16.6L7.7 15.4Z" fill="#fff"/></svg>
<svg style="left:63px;top:1051px;" width="19" height="19" viewBox="0 0 19 19"><circle cx="11.3" cy="7.3" r="5.3" fill="none" stroke="#fff" stroke-width="1.4"/><path d="M7.6 11.2L1.2 17.6" stroke="#fff" stroke-width="1.5"/></svg>
<svg style="left:110px;top:1051px;" width="20" height="18" viewBox="0 0 20 18"><g fill="none" stroke="#fff" stroke-width="1.15"><path d="M2.45 0.9V3.45H12.55V0.9"/><rect x="2.45" y="5.45" width="10.1" height="6.1"/><path d="M2.45 16.1V13.55H12.55V16.1"/><path d="M16.5 0.9V3.8M16.5 9V16.1"/></g><rect x="15" y="4.85" width="3" height="2.95" fill="#fff"/></svg>
<svg style="left:159px;top:1050px;" width="24" height="20" viewBox="0 0 24 20"><path d="M1 2.2h7.2l1.8 1.6H22.5V18.6H1Z" fill="#ffd869"/><path d="M1 5.2H22.5V18.6H1Z" fill="#ffe79a"/><rect x="2.3" y="2.9" width="4.6" height="1.1" fill="#5fc0ee"/><path d="M5 19.6V12.6h13.6v7h-3.7v-3.7H8.7v3.7Z" fill="#3cb2f2"/></svg>
<svg style="left:207px;top:1047px;" width="26" height="26" viewBox="0 0 26 26"><circle cx="13" cy="13" r="12" fill="#fff"/><path d="M13 13L2.6 7A12 12 0 0 1 23.4 7Z" fill="#e94335"/><path d="M13 13L23.4 7A12 12 0 0 1 13 25Z" fill="#fbc116"/><path d="M13 13L13 25A12 12 0 0 1 2.6 7Z" fill="#34a353"/><path d="M13 7.4H23.2A12 12 0 0 0 2.6 7L7.9 16Z" fill="#e94335"/><path d="M18 15.9L13 25A12 12 0 0 0 23.4 7H13Z" fill="#fbc116"/><path d="M8 15.9L2.6 7A12 12 0 0 0 13 25L18.1 15.9Z" fill="#34a353"/><circle cx="13" cy="13" r="5.7" fill="#fff"/><circle cx="13" cy="13" r="4.5" fill="#4285f4"/></svg>
<svg style="left:257px;top:1048px;" width="25" height="24" viewBox="0 0 25 24"><rect width="24.4" height="24" fill="#fff"/><g transform="translate(0.9 17.7) scale(0.8 1)"><text x="0" y="0" font-family="Liberation Sans" font-weight="700" font-style="italic" font-size="18.6" fill="#14235f" stroke="#14235f" stroke-width="1.1" letter-spacing="-0.9">LS</text></g><path d="M16.4 2.6L23.6 2.3L21.4 4.6C20.4 3.6 18.8 2.9 16.4 2.6Z" fill="#e2231a"/></svg>
<svg style="left:307px;top:1052px;" width="22" height="16" viewBox="0 0 22 16"><rect width="21.5" height="15" fill="#4fb4ee"/><rect x="0.8" y="0.8" width="19.9" height="13.4" fill="#79c9f4"/><circle cx="6" cy="6" r="3.6" fill="#2f8fd8"/><path d="M6 6V2.4A3.6 3.6 0 0 1 9.6 6Z" fill="#f6c75a"/><rect x="12.2" y="3" width="6.6" height="7" fill="#d9effb"/><path d="M13 4.6h5M13 6.4h5M13 8.2h5" stroke="#2f8fd8" stroke-width="0.9"/><rect x="2.6" y="11.6" width="7" height="1.1" fill="#f6c75a"/><rect x="10.4" y="11.6" width="8" height="1.1" fill="#2f8fd8"/></svg>
<svg style="left:356px;top:1049px;" width="22" height="22" viewBox="0 0 22 22"><g transform="translate(11,11)"><rect x="-1.9" y="-9" width="3.8" height="4" transform="rotate(0)" fill="#fff"/><rect x="-1.9" y="-9" width="3.8" height="4" transform="rotate(45)" fill="#fff"/><rect x="-1.9" y="-9" width="3.8" height="4" transform="rotate(90)" fill="#fff"/><rect x="-1.9" y="-9" width="3.8" height="4" transform="rotate(135)" fill="#fff"/><rect x="-1.9" y="-9" width="3.8" height="4" transform="rotate(180)" fill="#fff"/><rect x="-1.9" y="-9" width="3.8" height="4" transform="rotate(225)" fill="#fff"/><rect x="-1.9" y="-9" width="3.8" height="4" transform="rotate(270)" fill="#fff"/><rect x="-1.9" y="-9" width="3.8" height="4" transform="rotate(315)" fill="#fff"/><circle r="5.3" fill="none" stroke="#fff" stroke-width="2.7"/></g></svg>
<svg style="left:404px;top:1048px;" width="25" height="24" viewBox="0 0 25 24"><rect width="24.4" height="24" fill="#fff"/><g transform="translate(0.9 17.7) scale(0.8 1)"><text x="0" y="0" font-family="Liberation Sans" font-weight="700" font-style="italic" font-size="18.6" fill="#14235f" stroke="#14235f" stroke-width="1.1" letter-spacing="-0.9">LS</text></g><path d="M16.4 2.6L23.6 2.3L21.4 4.6C20.4 3.6 18.8 2.9 16.4 2.6Z" fill="#e2231a"/></svg>
<div style="left:441px;top:1040px;width:48px;height:40px;background:#34373d;"></div>
<svg style="left:452px;top:1048px;" width="26" height="24" viewBox="0 0 26 24"><rect x="7" y="1" width="18" height="22" rx="1.5" fill="#21a366"/><rect x="7" y="1" width="9" height="7.4" fill="#21a366"/><rect x="16" y="1" width="9" height="7.4" fill="#33c481"/><rect x="7" y="8.4" width="9" height="7.3" fill="#107c41"/><rect x="16" y="8.4" width="9" height="7.3" fill="#21a366"/><rect x="7" y="15.7" width="18" height="7.3" fill="#185c37"/><rect x="0.5" y="5.5" width="13" height="13" rx="1.2" fill="#107c41"/><path d="M4 8.6l5.8 6.8M9.8 8.6L4 15.4" stroke="#fff" stroke-width="1.7"/></svg>
<div style="left:151px;top:1078px;width:40px;height:2px;background:#7cbdee;"></div>
<div style="left:249px;top:1078px;width:40px;height:2px;background:#7cbdee;"></div>
<div style="left:298px;top:1078px;width:40px;height:2px;background:#7cbdee;"></div>
<div style="left:347px;top:1078px;width:40px;height:2px;background:#7cbdee;"></div>
<div style="left:396px;top:1078px;width:40px;height:2px;background:#7cbdee;"></div>
<div style="left:441px;top:1078px;width:48px;height:2px;background:#7cbdee;"></div>
<div style="left:281px;top:1078px;width:8px;height:2px;background:#5f8fb5;"></div>
<svg style="left:1736px;top:1055px;" width="14" height="9" viewBox="0 0 14 9"><path d="M1 8L7 2l6 6" fill="none" stroke="#fff" stroke-width="1.3"/></svg>
<svg style="left:1758px;top:1053px;" width="19" height="16" viewBox="0 0 19 16"><g fill="none" stroke="#fff" stroke-width="1.1"><path d="M4.5 1.5h12v9"/><path d="M1.5 1.5h4v3h-4zM3.5 4.5v9h5"/></g><path d="M13 5.6L17.8 14.6H8.2Z" fill="#f9c513"/><path d="M13 8.6v3.2M13 12.6v1.1" stroke="#111" stroke-width="1.1"/></svg>
<svg style="left:1782px;top:1053px;" width="17" height="14" viewBox="0 0 17 14"><path d="M1 4.8h2.8L7.2 1.4V12.6L3.8 9.2H1Z" fill="none" stroke="#fff" stroke-width="1.1"/><path d="M10 4.8l4.4 4.4M14.4 4.8L10 9.2" stroke="#fff" stroke-width="1.1"/></svg>
<span id="t221" class="t" style="left:1813.75px;top:1041.50px;line-height:18px;font-size:12px;color:#fff;font-family:'Liberation Sans',sans-serif;letter-spacing:-0.316px;">3:15 PM</span>
<span id="t222" class="t" style="left:1807px;top:1059.00px;line-height:18px;font-size:12px;color:#fff;font-family:'Liberation Sans',sans-serif;letter-spacing:-0.280px;">12/10/2024</span>
<svg style="left:1878px;top:1051px;" width="26" height="26" viewBox="0 0 26 26"><path d="M1.5 1.5h15v11.5h-9.5l0 0h-5.5z" fill="#fff"/><path d="M6 13v3l3-3z" fill="#fff"/><path d="M4 4.6h10M4 7.2h10M4 9.8h10" stroke="#070b13" stroke-width="1"/><circle cx="16.5" cy="16.8" r="8.2" fill="#2b2e34" stroke="#7a7c80" stroke-width="1"/><text x="16.5" y="21.2" text-anchor="middle" font-family="Liberation Sans" font-weight="700" font-size="12" fill="#fff">1</text></svg>
<div style="left:1915px;top:1040px;width:1px;height:40px;background:#5a5d62;"></div>
</div></body></html>
